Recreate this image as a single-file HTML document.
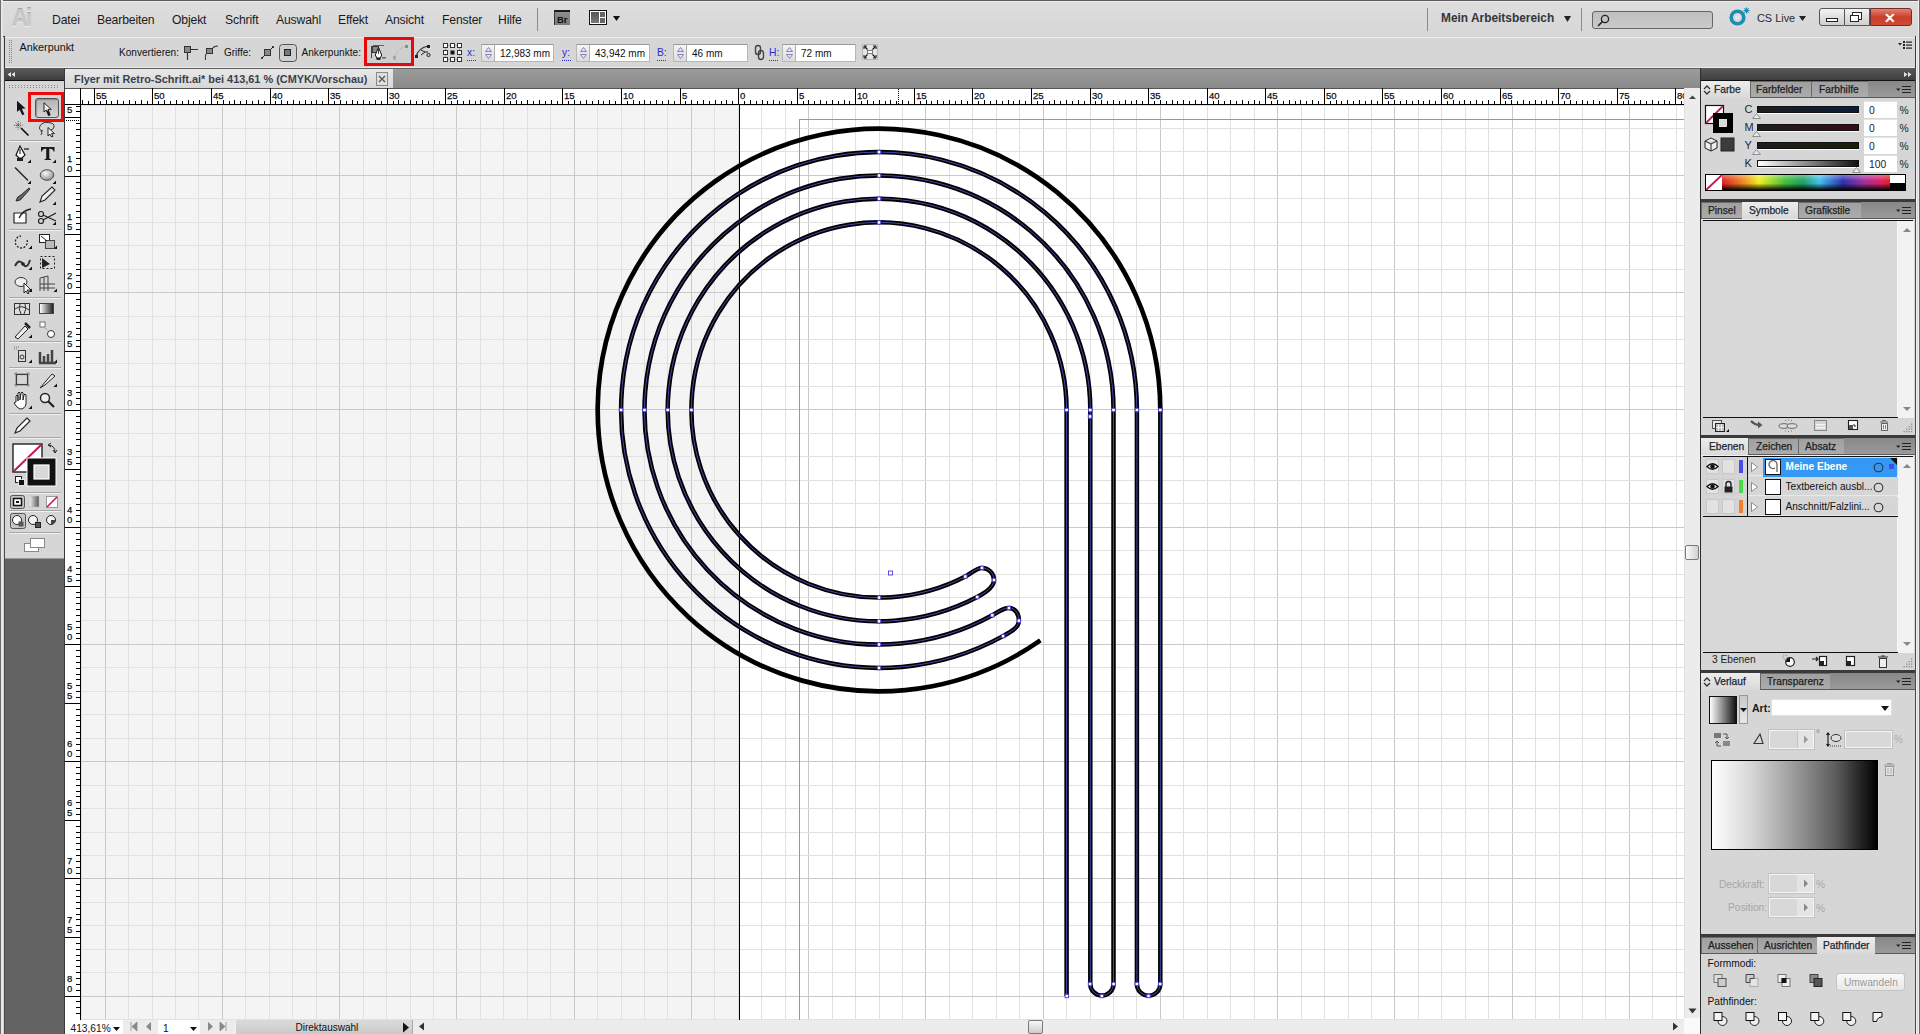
<!DOCTYPE html><html><head><meta charset="utf-8"><style>html,body{margin:0;padding:0;width:1920px;height:1034px;overflow:hidden;background:#d5d5d5;font-family:"Liberation Sans",sans-serif;}*{box-sizing:border-box;}</style></head><body><div style="position:absolute;left:0px;top:0px;width:1920px;height:1034px;background:#d5d5d5"></div><div style="position:absolute;left:0px;top:0px;width:1920px;height:36px;background:linear-gradient(#dedede,#d6d6d6)"></div><div style="position:absolute;left:0px;top:0px;width:1920px;height:1px;background:#5a5a5a"></div><div style="position:absolute;left:0px;top:1px;width:1920px;height:1px;background:#eeeeee"></div><div style="position:absolute;left:0px;top:36px;width:1920px;height:1px;background:#454545"></div><div style="position:absolute;left:11.5px;top:5.68px;font-size:24px;line-height:24px;color:#c8c8c8;font-weight:bold;white-space:nowrap;letter-spacing:-2.2px;transform:scaleX(0.92);transform-origin:left;text-shadow:0 1.2px 0 #ececec,0 -0.8px 0 #a4a4a4">Ai</div><div style="position:absolute;left:52px;top:13.97px;font-size:12.2px;line-height:12.2px;color:#1a1a1a;font-weight:normal;white-space:nowrap;letter-spacing:-0.15px">Datei</div><div style="position:absolute;left:97px;top:13.97px;font-size:12.2px;line-height:12.2px;color:#1a1a1a;font-weight:normal;white-space:nowrap;letter-spacing:-0.15px">Bearbeiten</div><div style="position:absolute;left:172px;top:13.97px;font-size:12.2px;line-height:12.2px;color:#1a1a1a;font-weight:normal;white-space:nowrap;letter-spacing:-0.15px">Objekt</div><div style="position:absolute;left:225px;top:13.97px;font-size:12.2px;line-height:12.2px;color:#1a1a1a;font-weight:normal;white-space:nowrap;letter-spacing:-0.15px">Schrift</div><div style="position:absolute;left:276px;top:13.97px;font-size:12.2px;line-height:12.2px;color:#1a1a1a;font-weight:normal;white-space:nowrap;letter-spacing:-0.15px">Auswahl</div><div style="position:absolute;left:338px;top:13.97px;font-size:12.2px;line-height:12.2px;color:#1a1a1a;font-weight:normal;white-space:nowrap;letter-spacing:-0.15px">Effekt</div><div style="position:absolute;left:385px;top:13.97px;font-size:12.2px;line-height:12.2px;color:#1a1a1a;font-weight:normal;white-space:nowrap;letter-spacing:-0.15px">Ansicht</div><div style="position:absolute;left:442px;top:13.97px;font-size:12.2px;line-height:12.2px;color:#1a1a1a;font-weight:normal;white-space:nowrap;letter-spacing:-0.15px">Fenster</div><div style="position:absolute;left:498px;top:13.97px;font-size:12.2px;line-height:12.2px;color:#1a1a1a;font-weight:normal;white-space:nowrap;letter-spacing:-0.15px">Hilfe</div><div style="position:absolute;left:537px;top:8px;width:1px;height:23px;background:#8a8a8a"></div><div style="position:absolute;left:554px;top:10px;width:16px;height:15px;background:linear-gradient(#8c8c8c,#7a7a7a);border-top:2px solid #1a1a1a;border-left:1px solid #333"></div><div style="position:absolute;left:557px;top:14.76px;font-size:9.5px;line-height:9.5px;color:#111;font-weight:bold;white-space:nowrap;">Br</div><div style="position:absolute;left:589px;top:10px;width:18px;height:15px;border:1.5px solid #111;background:#fff"></div><div style="position:absolute;left:591px;top:12px;width:8px;height:11px;background:linear-gradient(#555,#777)"></div><div style="position:absolute;left:600px;top:12px;width:5px;height:5px;background:#666"></div><div style="position:absolute;left:600px;top:18px;width:5px;height:5px;background:#666"></div><svg style="position:absolute;left:613px;top:16px;" width="7" height="5" viewBox="613 16 7 5"><path d="M613,16 L620,16 L616.5,21 Z" fill="#111"/></svg><div style="position:absolute;left:1427px;top:8px;width:1px;height:23px;background:#8a8a8a"></div><div style="position:absolute;left:1441px;top:13.43px;font-size:11.9px;line-height:11.9px;color:#33363c;font-weight:bold;white-space:nowrap;">Mein Arbeitsbereich</div><svg style="position:absolute;left:1564px;top:16px;" width="7" height="6" viewBox="1564 16 7 6"><path d="M1564,16 L1571,16 L1567.5,22 Z" fill="#222"/></svg><div style="position:absolute;left:1581px;top:8px;width:1px;height:23px;background:#8a8a8a"></div><div style="position:absolute;left:1592px;top:11px;width:121px;height:18px;background:linear-gradient(#c0c0c0,#cacaca);border:1px solid #666;border-radius:3px"></div><svg style="position:absolute;left:1596px;top:13px;" width="14" height="14" viewBox="1596 13 14 14"><circle cx="1605" cy="19" r="3.6" fill="none" stroke="#222" stroke-width="1.3"/><path d="M1602.5,21.5 L1598,26" stroke="#222" stroke-width="1.6"/></svg><svg style="position:absolute;left:1726px;top:6px;" width="24" height="22" viewBox="1726 6 24 22"><circle cx="1737.5" cy="17.5" r="6.3" fill="none" stroke="#1f8db2" stroke-width="3.6"/><circle cx="1737.5" cy="17.5" r="2.2" fill="#d8e8ee"/><path d="M1746.5,7.5 V13.5 M1743.5,10.5 H1749.5 M1744.4,8.4 L1748.6,12.6 M1748.6,8.4 L1744.4,12.6" stroke="#1f8db2" stroke-width="1.1"/></svg><div style="position:absolute;left:1757px;top:13.07px;font-size:10.9px;line-height:10.9px;color:#2a2a2a;font-weight:normal;white-space:nowrap;">CS Live</div><svg style="position:absolute;left:1799px;top:16px;" width="7" height="5" viewBox="1799 16 7 5"><path d="M1799,16 L1806,16 L1802.5,21 Z" fill="#222"/></svg><div style="position:absolute;left:1819px;top:8px;width:26px;height:18px;background:linear-gradient(#f2f2f2,#cfcfcf);border:1px solid #555;border-radius:3px 0 0 3px"></div><div style="position:absolute;left:1826px;top:18px;width:12px;height:4px;background:#fff;border:1px solid #222"></div><div style="position:absolute;left:1845px;top:8px;width:25px;height:18px;background:linear-gradient(#f2f2f2,#cfcfcf);border:1px solid #555;border-left:none"></div><div style="position:absolute;left:1852px;top:12px;width:10px;height:8px;border:1.5px solid #222;background:#fff"></div><div style="position:absolute;left:1850px;top:15px;width:9px;height:7px;border:1.5px solid #222;background:#fff"></div><div style="position:absolute;left:1870px;top:8px;width:42px;height:18px;background:linear-gradient(#e88070,#c8402c 50%,#d04a30);border:1px solid #6a3030;border-radius:0 3px 3px 0"></div><div style="position:absolute;left:1884px;top:11.15px;font-size:14px;line-height:14px;color:#fff;font-weight:bold;white-space:nowrap;">✕</div><div style="position:absolute;left:0px;top:0px;width:1px;height:1034px;background:#6e6e6e"></div><div style="position:absolute;left:1px;top:0px;width:2px;height:1034px;background:#e6e6e6"></div><div style="position:absolute;left:1916px;top:36px;width:1px;height:998px;background:#f0f0f0"></div><div style="position:absolute;left:1917px;top:36px;width:1px;height:998px;background:#dadada"></div><div style="position:absolute;left:1918px;top:0px;width:1px;height:1034px;background:#f0f0f0"></div><div style="position:absolute;left:1919px;top:0px;width:1px;height:1034px;background:#6a6a6a"></div><div style="position:absolute;left:4px;top:36px;width:1912px;height:32px;background:#d6d6d6"></div><div style="position:absolute;left:4px;top:36px;width:1px;height:32px;background:#3a3a3a"></div><div style="position:absolute;left:5px;top:37px;width:1911px;height:1px;background:#ececec"></div><div style="position:absolute;left:1915px;top:36px;width:1px;height:32px;background:#3a3a3a"></div><div style="position:absolute;left:5px;top:67px;width:1910px;height:1px;background:#ececec"></div><div style="position:absolute;left:9px;top:40px;width:1px;height:1px;background:#888"></div><div style="position:absolute;left:11px;top:40px;width:1px;height:1px;background:#888"></div><div style="position:absolute;left:9px;top:42px;width:1px;height:1px;background:#888"></div><div style="position:absolute;left:11px;top:42px;width:1px;height:1px;background:#888"></div><div style="position:absolute;left:9px;top:44px;width:1px;height:1px;background:#888"></div><div style="position:absolute;left:11px;top:44px;width:1px;height:1px;background:#888"></div><div style="position:absolute;left:9px;top:46px;width:1px;height:1px;background:#888"></div><div style="position:absolute;left:11px;top:46px;width:1px;height:1px;background:#888"></div><div style="position:absolute;left:9px;top:48px;width:1px;height:1px;background:#888"></div><div style="position:absolute;left:11px;top:48px;width:1px;height:1px;background:#888"></div><div style="position:absolute;left:9px;top:50px;width:1px;height:1px;background:#888"></div><div style="position:absolute;left:11px;top:50px;width:1px;height:1px;background:#888"></div><div style="position:absolute;left:9px;top:52px;width:1px;height:1px;background:#888"></div><div style="position:absolute;left:11px;top:52px;width:1px;height:1px;background:#888"></div><div style="position:absolute;left:9px;top:54px;width:1px;height:1px;background:#888"></div><div style="position:absolute;left:11px;top:54px;width:1px;height:1px;background:#888"></div><div style="position:absolute;left:9px;top:56px;width:1px;height:1px;background:#888"></div><div style="position:absolute;left:11px;top:56px;width:1px;height:1px;background:#888"></div><div style="position:absolute;left:9px;top:58px;width:1px;height:1px;background:#888"></div><div style="position:absolute;left:11px;top:58px;width:1px;height:1px;background:#888"></div><div style="position:absolute;left:9px;top:60px;width:1px;height:1px;background:#888"></div><div style="position:absolute;left:11px;top:60px;width:1px;height:1px;background:#888"></div><div style="position:absolute;left:9px;top:62px;width:1px;height:1px;background:#888"></div><div style="position:absolute;left:11px;top:62px;width:1px;height:1px;background:#888"></div><div style="position:absolute;left:19.5px;top:41.66px;font-size:10.8px;line-height:10.8px;color:#111;font-weight:normal;white-space:nowrap;">Ankerpunkt</div><div style="position:absolute;left:119px;top:48.25px;font-size:10.1px;line-height:10.1px;color:#111;font-weight:normal;white-space:nowrap;">Konvertieren:</div><svg style="position:absolute;left:183px;top:44px;" width="37" height="18" viewBox="183 44 37 18"><rect x="184.5" y="46.5" width="6" height="6" fill="#888" stroke="#333" stroke-width="1"/><path d="M191,49.5 H198 M187.5,53 V60" stroke="#333" stroke-width="1.2"/><rect x="206.5" y="48.5" width="6" height="5" fill="#888" stroke="#333" stroke-width="1"/><path d="M213,48 Q214,46 218,46 M206,54 Q205,56 205.5,60" stroke="#333" stroke-width="1.1" fill="none"/></svg><div style="position:absolute;left:224px;top:48.33px;font-size:10.0px;line-height:10.0px;color:#111;font-weight:normal;white-space:nowrap;">Griffe:</div><svg style="position:absolute;left:260px;top:43px;" width="38" height="20" viewBox="260 43 38 20"><rect x="264.5" y="49.5" width="6" height="6" fill="#888" stroke="#333" stroke-width="1"/><path d="M262,58 L264.5,55.5 M270.5,49.5 L273,47" stroke="#222" stroke-width="1"/><circle cx="262" cy="58" r="1" fill="#111"/><circle cx="273" cy="47" r="1" fill="#111"/><rect x="279.5" y="44.5" width="17" height="17" rx="3" fill="#cfcfcf" stroke="#555" stroke-width="1"/><rect x="284.5" y="49.5" width="6" height="6" fill="#777" stroke="#222" stroke-width="1"/></svg><div style="position:absolute;left:301.5px;top:48.25px;font-size:10.1px;line-height:10.1px;color:#111;font-weight:normal;white-space:nowrap;">Ankerpunkte:</div><div style="position:absolute;left:364px;top:37px;width:50px;height:29px;border:3.4px solid #e8080a;background:#cfcfcf"></div><svg style="position:absolute;left:368px;top:41px;" width="42" height="21" viewBox="368 41 42 21"><path d="M373,45.5 H384" stroke="#555" stroke-width="0.9" fill="none"/><path d="M371.5,46 V58" stroke="#333" stroke-width="0.9" fill="none"/><rect x="372.5" y="46.5" width="6" height="6" fill="#8a8a8a" stroke="#333"/><path d="M378.5,47.5 L375.3,55 L376.8,58 L380.2,58 L381.7,55 Z" fill="#fff" stroke="#111" stroke-width="1"/><path d="M378.5,49 V54" stroke="#111" stroke-width="0.8"/><rect x="376.5" y="58" width="4" height="1.8" fill="#111"/><path d="M382,57.8 H386" stroke="#555" stroke-width="1.3"/><path d="M394.5,57 Q397,49 405,46.5" stroke="#aaa" stroke-width="1" fill="none" stroke-dasharray="1.5,1"/><rect x="393" y="56" width="3" height="3.5" fill="#a4a4a4"/><rect x="405" y="45" width="3" height="3" fill="#8a8a8a"/></svg><svg style="position:absolute;left:414px;top:43px;" width="18" height="18" viewBox="414 43 18 18"><path d="M416,57 Q418,48 428,46" stroke="#333" stroke-width="1.2" fill="none"/><rect x="415" y="55" width="3" height="3" fill="#222"/><rect x="427" y="45" width="3" height="3" fill="#222"/><path d="M421,55 L425,52 L421,50 M425,52 H428" stroke="#222" stroke-width="1" fill="none"/><circle cx="428.5" cy="55" r="1.6" fill="none" stroke="#222"/></svg><svg style="position:absolute;left:442px;top:42px;" width="22" height="22" viewBox="442 42 22 22"><rect x="445.5" y="45.5" width="14" height="14" fill="none" stroke="#777" stroke-width="1" stroke-dasharray="1,1"/><rect x="443.5" y="43.5" width="4" height="4" fill="#fff" stroke="#333" stroke-width="1"/><rect x="443.5" y="50.5" width="4" height="4" fill="#fff" stroke="#333" stroke-width="1"/><rect x="443.5" y="57.5" width="4" height="4" fill="#fff" stroke="#333" stroke-width="1"/><rect x="450.5" y="43.5" width="4" height="4" fill="#fff" stroke="#333" stroke-width="1"/><rect x="450.5" y="50.5" width="4" height="4" fill="#111"/><rect x="450.5" y="57.5" width="4" height="4" fill="#fff" stroke="#333" stroke-width="1"/><rect x="457.5" y="43.5" width="4" height="4" fill="#fff" stroke="#333" stroke-width="1"/><rect x="457.5" y="50.5" width="4" height="4" fill="#fff" stroke="#333" stroke-width="1"/><rect x="457.5" y="57.5" width="4" height="4" fill="#fff" stroke="#333" stroke-width="1"/></svg><div style="position:absolute;left:467px;top:48.08px;font-size:10.3px;line-height:10.3px;color:#2a2ad0;font-weight:normal;white-space:nowrap;">x:</div><div style="position:absolute;left:467px;top:60px;width:1px;height:1px;background:#2a2ad0"></div><div style="position:absolute;left:469px;top:60px;width:1px;height:1px;background:#2a2ad0"></div><div style="position:absolute;left:471px;top:60px;width:1px;height:1px;background:#2a2ad0"></div><div style="position:absolute;left:473px;top:60px;width:1px;height:1px;background:#2a2ad0"></div><div style="position:absolute;left:475px;top:60px;width:1px;height:1px;background:#2a2ad0"></div><div style="position:absolute;left:481px;top:44px;width:73px;height:18px;background:#fff;border:1px solid #b8b8b8;border-top-color:#9a9a9a"></div><div style="position:absolute;left:482px;top:45px;width:13px;height:16px;background:linear-gradient(#f4f4f4,#dcdcdc);border-right:1px solid #b0b0b0"></div><svg style="position:absolute;left:484px;top:46px;" width="9" height="13" viewBox="484 46 9 13"><path d="M485.5,51.5 L488.5,47.5 L491.5,51.5 Z M485.5,54.5 L488.5,58.5 L491.5,54.5 Z" fill="#e4e4f4" stroke="#7878b8" stroke-width="0.9"/></svg><div style="position:absolute;left:500px;top:48.83px;font-size:10.0px;line-height:10.0px;color:#111;font-weight:normal;white-space:nowrap;">12,983 mm</div><div style="position:absolute;left:562px;top:48.08px;font-size:10.3px;line-height:10.3px;color:#2a2ad0;font-weight:normal;white-space:nowrap;">y:</div><div style="position:absolute;left:562px;top:60px;width:1px;height:1px;background:#2a2ad0"></div><div style="position:absolute;left:564px;top:60px;width:1px;height:1px;background:#2a2ad0"></div><div style="position:absolute;left:566px;top:60px;width:1px;height:1px;background:#2a2ad0"></div><div style="position:absolute;left:568px;top:60px;width:1px;height:1px;background:#2a2ad0"></div><div style="position:absolute;left:570px;top:60px;width:1px;height:1px;background:#2a2ad0"></div><div style="position:absolute;left:576px;top:44px;width:74px;height:18px;background:#fff;border:1px solid #b8b8b8;border-top-color:#9a9a9a"></div><div style="position:absolute;left:577px;top:45px;width:13px;height:16px;background:linear-gradient(#f4f4f4,#dcdcdc);border-right:1px solid #b0b0b0"></div><svg style="position:absolute;left:579px;top:46px;" width="9" height="13" viewBox="579 46 9 13"><path d="M580.5,51.5 L583.5,47.5 L586.5,51.5 Z M580.5,54.5 L583.5,58.5 L586.5,54.5 Z" fill="#e4e4f4" stroke="#7878b8" stroke-width="0.9"/></svg><div style="position:absolute;left:595px;top:48.83px;font-size:10.0px;line-height:10.0px;color:#111;font-weight:normal;white-space:nowrap;">43,942 mm</div><div style="position:absolute;left:657px;top:48.08px;font-size:10.3px;line-height:10.3px;color:#2a2ad0;font-weight:normal;white-space:nowrap;">B:</div><div style="position:absolute;left:657px;top:60px;width:1px;height:1px;background:#2a2ad0"></div><div style="position:absolute;left:659px;top:60px;width:1px;height:1px;background:#2a2ad0"></div><div style="position:absolute;left:661px;top:60px;width:1px;height:1px;background:#2a2ad0"></div><div style="position:absolute;left:663px;top:60px;width:1px;height:1px;background:#2a2ad0"></div><div style="position:absolute;left:665px;top:60px;width:1px;height:1px;background:#2a2ad0"></div><div style="position:absolute;left:673px;top:44px;width:75px;height:18px;background:#fff;border:1px solid #b8b8b8;border-top-color:#9a9a9a"></div><div style="position:absolute;left:674px;top:45px;width:13px;height:16px;background:linear-gradient(#f4f4f4,#dcdcdc);border-right:1px solid #b0b0b0"></div><svg style="position:absolute;left:676px;top:46px;" width="9" height="13" viewBox="676 46 9 13"><path d="M677.5,51.5 L680.5,47.5 L683.5,51.5 Z M677.5,54.5 L680.5,58.5 L683.5,54.5 Z" fill="#e4e4f4" stroke="#7878b8" stroke-width="0.9"/></svg><div style="position:absolute;left:692px;top:48.83px;font-size:10.0px;line-height:10.0px;color:#111;font-weight:normal;white-space:nowrap;">46 mm</div><div style="position:absolute;left:769px;top:48.08px;font-size:10.3px;line-height:10.3px;color:#2a2ad0;font-weight:normal;white-space:nowrap;">H:</div><div style="position:absolute;left:769px;top:60px;width:1px;height:1px;background:#2a2ad0"></div><div style="position:absolute;left:771px;top:60px;width:1px;height:1px;background:#2a2ad0"></div><div style="position:absolute;left:773px;top:60px;width:1px;height:1px;background:#2a2ad0"></div><div style="position:absolute;left:775px;top:60px;width:1px;height:1px;background:#2a2ad0"></div><div style="position:absolute;left:777px;top:60px;width:1px;height:1px;background:#2a2ad0"></div><div style="position:absolute;left:782px;top:44px;width:74px;height:18px;background:#fff;border:1px solid #b8b8b8;border-top-color:#9a9a9a"></div><div style="position:absolute;left:783px;top:45px;width:13px;height:16px;background:linear-gradient(#f4f4f4,#dcdcdc);border-right:1px solid #b0b0b0"></div><svg style="position:absolute;left:785px;top:46px;" width="9" height="13" viewBox="785 46 9 13"><path d="M786.5,51.5 L789.5,47.5 L792.5,51.5 Z M786.5,54.5 L789.5,58.5 L792.5,54.5 Z" fill="#e4e4f4" stroke="#7878b8" stroke-width="0.9"/></svg><div style="position:absolute;left:801px;top:48.83px;font-size:10.0px;line-height:10.0px;color:#111;font-weight:normal;white-space:nowrap;">72 mm</div><svg style="position:absolute;left:754px;top:44px;" width="12" height="18" viewBox="754 44 12 18"><rect x="755.5" y="45.5" width="5" height="9" rx="2.5" fill="none" stroke="#444" stroke-width="1.4"/><rect x="758.5" y="50.5" width="5" height="9" rx="2.5" fill="none" stroke="#444" stroke-width="1.4"/></svg><svg style="position:absolute;left:862px;top:44px;" width="17" height="17" viewBox="862 44 17 17"><rect x="862.5" y="44.5" width="15" height="15" fill="#e6e6e6" stroke="#b4b4b4"/><path d="M864.5,46.5 L867.5,49.5 M875.5,46.5 L872.5,49.5 M864.5,57.5 L867.5,54.5 M875.5,57.5 L872.5,54.5" stroke="#111" stroke-width="1.1"/><path d="M864,46 h3 M864,46 v3 M876,46 h-3 M876,46 v3 M864,58 h3 M864,58 v-3 M876,58 h-3 M876,58 v-3" stroke="#111" stroke-width="1"/><rect x="867.5" y="50.5" width="5" height="3" fill="#fff" stroke="#777"/></svg><svg style="position:absolute;left:1898px;top:40px;" width="15" height="11" viewBox="1898 40 15 11"><path d="M1898,43 L1902,43 L1900,45.5 Z" fill="#222"/><rect x="1903" y="41" width="2" height="2" fill="#222"/><rect x="1906" y="41.5" width="6" height="1.2" fill="#222"/><rect x="1903" y="44" width="2" height="2" fill="#222"/><rect x="1906" y="44.5" width="6" height="1.2" fill="#222"/><rect x="1903" y="47" width="2" height="2" fill="#222"/><rect x="1906" y="47.5" width="6" height="1.2" fill="#222"/></svg><div style="position:absolute;left:4px;top:68px;width:1696px;height:20px;background:linear-gradient(#9c9c9c,#8a8a8a)"></div><div style="position:absolute;left:4px;top:68px;width:1912px;height:1px;background:#5e5e5e"></div><div style="position:absolute;left:65px;top:69px;width:328px;height:19px;background:linear-gradient(#e8e8e8,#d8d8d8)"></div><div style="position:absolute;left:74px;top:74.07px;font-size:10.9px;line-height:10.9px;color:#3a404c;font-weight:bold;white-space:nowrap;">Flyer mit Retro-Schrift.ai* bei 413,61 % (CMYK/Vorschau)</div><div style="position:absolute;left:376px;top:72px;width:12px;height:14px;border:1px solid #8a8a8a;background:#dedede"></div><svg style="position:absolute;left:377px;top:73px;" width="10" height="12" viewBox="377 73 10 12"><path d="M379,76 L385,82 M385,76 L379,82" stroke="#555" stroke-width="1.2"/></svg><div style="position:absolute;left:4px;top:68px;width:61px;height:966px;background:#636363"></div><div style="position:absolute;left:4px;top:68px;width:1px;height:966px;background:#4a4a4a"></div><div style="position:absolute;left:5px;top:68px;width:60px;height:12px;background:linear-gradient(#5c5c5c,#3e3e3e)"></div><div style="position:absolute;left:5px;top:80px;width:60px;height:1px;background:#111"></div><svg style="position:absolute;left:7px;top:71px;" width="10" height="7" viewBox="7 71 10 7"><path d="M7.5,74.5 L11,72 L11,77 Z M11.5,74.5 L15,72 L15,77 Z" fill="#e4e4e4"/></svg><div style="position:absolute;left:5px;top:81px;width:60px;height:478px;background:#d6d6d6;border-bottom:1px solid #9a9a9a"></div><div style="position:absolute;left:64px;top:68px;width:1px;height:966px;background:#3a3a3a"></div><div style="position:absolute;left:9px;top:85px;width:1px;height:1px;background:#8a8a8a"></div><div style="position:absolute;left:9px;top:87px;width:1px;height:1px;background:#8a8a8a"></div><div style="position:absolute;left:12px;top:85px;width:1px;height:1px;background:#8a8a8a"></div><div style="position:absolute;left:12px;top:87px;width:1px;height:1px;background:#8a8a8a"></div><div style="position:absolute;left:15px;top:85px;width:1px;height:1px;background:#8a8a8a"></div><div style="position:absolute;left:15px;top:87px;width:1px;height:1px;background:#8a8a8a"></div><div style="position:absolute;left:18px;top:85px;width:1px;height:1px;background:#8a8a8a"></div><div style="position:absolute;left:18px;top:87px;width:1px;height:1px;background:#8a8a8a"></div><div style="position:absolute;left:21px;top:85px;width:1px;height:1px;background:#8a8a8a"></div><div style="position:absolute;left:21px;top:87px;width:1px;height:1px;background:#8a8a8a"></div><div style="position:absolute;left:24px;top:85px;width:1px;height:1px;background:#8a8a8a"></div><div style="position:absolute;left:24px;top:87px;width:1px;height:1px;background:#8a8a8a"></div><div style="position:absolute;left:27px;top:85px;width:1px;height:1px;background:#8a8a8a"></div><div style="position:absolute;left:27px;top:87px;width:1px;height:1px;background:#8a8a8a"></div><div style="position:absolute;left:30px;top:85px;width:1px;height:1px;background:#8a8a8a"></div><div style="position:absolute;left:30px;top:87px;width:1px;height:1px;background:#8a8a8a"></div><div style="position:absolute;left:33px;top:85px;width:1px;height:1px;background:#8a8a8a"></div><div style="position:absolute;left:33px;top:87px;width:1px;height:1px;background:#8a8a8a"></div><div style="position:absolute;left:36px;top:85px;width:1px;height:1px;background:#8a8a8a"></div><div style="position:absolute;left:36px;top:87px;width:1px;height:1px;background:#8a8a8a"></div><div style="position:absolute;left:39px;top:85px;width:1px;height:1px;background:#8a8a8a"></div><div style="position:absolute;left:39px;top:87px;width:1px;height:1px;background:#8a8a8a"></div><div style="position:absolute;left:42px;top:85px;width:1px;height:1px;background:#8a8a8a"></div><div style="position:absolute;left:42px;top:87px;width:1px;height:1px;background:#8a8a8a"></div><div style="position:absolute;left:45px;top:85px;width:1px;height:1px;background:#8a8a8a"></div><div style="position:absolute;left:45px;top:87px;width:1px;height:1px;background:#8a8a8a"></div><div style="position:absolute;left:48px;top:85px;width:1px;height:1px;background:#8a8a8a"></div><div style="position:absolute;left:48px;top:87px;width:1px;height:1px;background:#8a8a8a"></div><div style="position:absolute;left:51px;top:85px;width:1px;height:1px;background:#8a8a8a"></div><div style="position:absolute;left:51px;top:87px;width:1px;height:1px;background:#8a8a8a"></div><div style="position:absolute;left:54px;top:85px;width:1px;height:1px;background:#8a8a8a"></div><div style="position:absolute;left:54px;top:87px;width:1px;height:1px;background:#8a8a8a"></div><div style="position:absolute;left:57px;top:85px;width:1px;height:1px;background:#8a8a8a"></div><div style="position:absolute;left:57px;top:87px;width:1px;height:1px;background:#8a8a8a"></div><svg style="position:absolute;left:27px;top:159px;" width="5" height="5" viewBox="27 159 5 5"><path d="M31,159.5 L31,163 L27.5,163 Z" fill="#111"/></svg><svg style="position:absolute;left:52px;top:159px;" width="5" height="5" viewBox="52 159 5 5"><path d="M56,159.5 L56,163 L52.5,163 Z" fill="#111"/></svg><svg style="position:absolute;left:27px;top:180px;" width="5" height="5" viewBox="27 180 5 5"><path d="M31,180.5 L31,184 L27.5,184 Z" fill="#111"/></svg><svg style="position:absolute;left:52px;top:180px;" width="5" height="5" viewBox="52 180 5 5"><path d="M56,180.5 L56,184 L52.5,184 Z" fill="#111"/></svg><svg style="position:absolute;left:52px;top:201px;" width="5" height="5" viewBox="52 201 5 5"><path d="M56,201.5 L56,205 L52.5,205 Z" fill="#111"/></svg><svg style="position:absolute;left:52px;top:221px;" width="5" height="5" viewBox="52 221 5 5"><path d="M56,221.5 L56,225 L52.5,225 Z" fill="#111"/></svg><svg style="position:absolute;left:28px;top:245px;" width="5" height="5" viewBox="28 245 5 5"><path d="M32,245.5 L32,249 L28.5,249 Z" fill="#111"/></svg><svg style="position:absolute;left:53px;top:245px;" width="5" height="5" viewBox="53 245 5 5"><path d="M57,245.5 L57,249 L53.5,249 Z" fill="#111"/></svg><svg style="position:absolute;left:28px;top:266px;" width="5" height="5" viewBox="28 266 5 5"><path d="M32,266.5 L32,270 L28.5,270 Z" fill="#111"/></svg><svg style="position:absolute;left:28px;top:288px;" width="5" height="5" viewBox="28 288 5 5"><path d="M32,288.5 L32,292 L28.5,292 Z" fill="#111"/></svg><svg style="position:absolute;left:53px;top:288px;" width="5" height="5" viewBox="53 288 5 5"><path d="M57,288.5 L57,292 L53.5,292 Z" fill="#111"/></svg><svg style="position:absolute;left:28px;top:334px;" width="5" height="5" viewBox="28 334 5 5"><path d="M32,334.5 L32,338 L28.5,338 Z" fill="#111"/></svg><svg style="position:absolute;left:28px;top:359px;" width="5" height="5" viewBox="28 359 5 5"><path d="M32,359.5 L32,363 L28.5,363 Z" fill="#111"/></svg><svg style="position:absolute;left:53px;top:359px;" width="5" height="5" viewBox="53 359 5 5"><path d="M57,359.5 L57,363 L53.5,363 Z" fill="#111"/></svg><svg style="position:absolute;left:53px;top:383px;" width="5" height="5" viewBox="53 383 5 5"><path d="M57,383.5 L57,387 L53.5,387 Z" fill="#111"/></svg><svg style="position:absolute;left:28px;top:405px;" width="5" height="5" viewBox="28 405 5 5"><path d="M32,405.5 L32,409 L28.5,409 Z" fill="#111"/></svg><div style="position:absolute;left:28px;top:92px;width:36px;height:30px;border:3.6px solid #ee0a0a"></div><div style="position:absolute;left:35px;top:98px;width:24px;height:20px;background:linear-gradient(#b4b4b4,#d4d4d4);border:1px solid #555;border-radius:3px;box-shadow:inset 1px 1px 1px rgba(0,0,0,0.25)"></div><svg style="position:absolute;left:14px;top:98px;" width="16" height="20" viewBox="14 98 16 20"><path d="M17,100.8 L17,112 L19.6,109.8 L22.3,115.2 L24.4,114.2 L21.8,108.8 L25.6,108.6 Z" fill="#151515"/></svg><svg style="position:absolute;left:40px;top:100px;" width="16" height="18" viewBox="40 100 16 18"><path d="M44,102.8 L44,112 L46.2,110 L48.5,115.6 L50.2,114.9 L48,109.4 L51.2,109.4 Z" fill="#f4f4f4" stroke="#111" stroke-width="0.9"/><path d="M46.6,111 L48.5,115.6 L50.2,114.9 L48.2,110.2 Z" fill="#111"/></svg><svg style="position:absolute;left:12px;top:119px;" width="20" height="19" viewBox="12 119 20 19"><path d="M21,128 L28.5,135.5" stroke="#111" stroke-width="1.7"/><path d="M15.5,122.5 L21,128 M21,122.5 L15.5,128 M18.2,121 V129.5 M14,125.3 H22.5" stroke="#444" stroke-width="0.9" stroke-dasharray="1.2,0.8"/></svg><svg style="position:absolute;left:36px;top:119px;" width="22" height="19" viewBox="36 119 22 19"><path d="M43,131 Q38,130 40,126 Q42,122 48,122.5 Q55,123 54,127 Q53.5,129.5 50,130.5" fill="none" stroke="#333" stroke-width="1"/><path d="M41,131 Q43,133 41,135" fill="none" stroke="#333" stroke-width="1"/><path d="M48,127.5 L48,136 L50,134.2 L51.6,137 L53,136.3 L51.5,133.6 L54.5,133.6 Z" fill="#f4f4f4" stroke="#111" stroke-width="0.9"/></svg><div style="position:absolute;left:9px;top:141px;width:52px;height:1px;background:#f0f0f0"></div><div style="position:absolute;left:9px;top:140px;width:52px;height:1px;background:#a8a8a8"></div><svg style="position:absolute;left:13px;top:144px;" width="20" height="20" viewBox="13 144 20 20"><path d="M20,146 L16,155 L19,158 L22,158 L25,155 Z" fill="#fff" stroke="#111" stroke-width="1.2"/><path d="M20,149 V154" stroke="#111"/><path d="M24,149 H29" stroke="#111" stroke-width="1.2"/><rect x="17" y="158" width="6" height="3" fill="#222"/></svg><svg style="position:absolute;left:40px;top:145px;" width="16" height="17" viewBox="40 145 16 17"><path d="M41,147 H54.5 V151.5 H53.5 Q53,148.8 50,148.8 H49.3 V158 Q49.3,159.2 51,159.3 V160 H44.5 V159.3 Q46.2,159.2 46.2,158 V148.8 H45.5 Q42.5,148.8 42,151.5 H41 Z" fill="#1a1a1a"/></svg><svg style="position:absolute;left:13px;top:166px;" width="20" height="18" viewBox="13 166 20 18"><path d="M15,167.5 L28,180.5" stroke="#222" stroke-width="1.4"/></svg><svg style="position:absolute;left:38px;top:166px;" width="20" height="18" viewBox="38 166 20 18"><defs><radialGradient id="eg" cx="0.4" cy="0.35" r="0.7"><stop offset="0" stop-color="#fafafa"/><stop offset="1" stop-color="#8a8a8a"/></radialGradient></defs><ellipse cx="47" cy="175" rx="6.8" ry="5.3" fill="url(#eg)" stroke="#444" stroke-width="0.9"/></svg><svg style="position:absolute;left:13px;top:186px;" width="20" height="18" viewBox="13 186 20 18"><path d="M16,201 Q17,196 21,195 L29,188 L30,189 L23,197 Q21,201 16,201 Z" fill="#666" stroke="#222" stroke-width="0.9"/></svg><svg style="position:absolute;left:38px;top:186px;" width="20" height="18" viewBox="38 186 20 18"><path d="M40,202 L42,196 L52,187 L55,190 L45,200 Z" fill="#eee" stroke="#222" stroke-width="1.1"/></svg><svg style="position:absolute;left:12px;top:207px;" width="22" height="18" viewBox="12 207 22 18"><path d="M14,213 H26 V223 H14 Z" fill="#fff" stroke="#222" stroke-width="1.2"/><path d="M19,218 Q23,210 31,209" stroke="#222" stroke-width="1.4" fill="none"/></svg><svg style="position:absolute;left:37px;top:207px;" width="22" height="18" viewBox="37 207 22 18"><circle cx="41" cy="214" r="2.5" fill="none" stroke="#222" stroke-width="1.2"/><circle cx="41" cy="221" r="2.5" fill="none" stroke="#222" stroke-width="1.2"/><path d="M43,215 L56,221 M43,220 L56,213" stroke="#222" stroke-width="1.3"/></svg><div style="position:absolute;left:9px;top:229px;width:52px;height:1px;background:#a8a8a8"></div><div style="position:absolute;left:9px;top:230px;width:52px;height:1px;background:#f0f0f0"></div><svg style="position:absolute;left:12px;top:232px;" width="22" height="20" viewBox="12 232 22 20"><path d="M27,240 A6,6 0 1 1 21,236" fill="none" stroke="#222" stroke-width="1.3" stroke-dasharray="2,1.5"/></svg><svg style="position:absolute;left:37px;top:233px;" width="22" height="18" viewBox="37 233 22 18"><rect x="39.5" y="234.5" width="10" height="8" fill="#fff" stroke="#222"/><rect x="45.5" y="240.5" width="9" height="8" fill="#bbb" stroke="#444"/><path d="M41,236 L47,241" stroke="#222"/></svg><svg style="position:absolute;left:12px;top:254px;" width="22" height="20" viewBox="12 254 22 20"><path d="M15,266 Q19,258 23,264 Q27,270 30,260" fill="none" stroke="#333" stroke-width="2"/><circle cx="23" cy="264" r="1.8" fill="#222"/></svg><svg style="position:absolute;left:37px;top:254px;" width="22" height="20" viewBox="37 254 22 20"><rect x="40.5" y="256.5" width="14" height="12" fill="none" stroke="#222" stroke-dasharray="2,2"/><path d="M42,258 L42,268 L50,264 Z" fill="#222"/></svg><svg style="position:absolute;left:12px;top:275px;" width="22" height="20" viewBox="12 275 22 20"><ellipse cx="21" cy="282" rx="6" ry="4.5" fill="#eee" stroke="#333"/><path d="M24,283 L24,293 L26,291 L28,294 L29,293 L27,290 L31,290 Z" fill="#fff" stroke="#111" stroke-width="0.9"/></svg><svg style="position:absolute;left:37px;top:275px;" width="22" height="20" viewBox="37 275 22 20"><path d="M40,291 L40,278 L48,276 L48,291 M44,277 V291 M40,284 H48 M48,284 H55 M40,288 H55" fill="none" stroke="#444" stroke-width="1"/></svg><div style="position:absolute;left:9px;top:297px;width:52px;height:1px;background:#a8a8a8"></div><div style="position:absolute;left:9px;top:298px;width:52px;height:1px;background:#f0f0f0"></div><svg style="position:absolute;left:12px;top:301px;" width="22" height="18" viewBox="12 301 22 18"><rect x="14.5" y="303.5" width="15" height="11" fill="#ddd" stroke="#333"/><path d="M15,309 Q22,304 29,310 M20,304 Q18,309 21,314 M25,304 Q27,309 24,314" fill="none" stroke="#333"/></svg><div style="position:absolute;left:39px;top:303px;width:15px;height:11px;background:linear-gradient(90deg,#fff,#222);border:1px solid #444"></div><svg style="position:absolute;left:12px;top:320px;" width="22" height="20" viewBox="12 320 22 20"><path d="M15,337 L25,326 L28,329 L18,339 Z" fill="#eee" stroke="#222"/><path d="M25,323 L30,328" stroke="#222" stroke-width="2.5"/></svg><svg style="position:absolute;left:37px;top:320px;" width="22" height="20" viewBox="37 320 22 20"><rect x="40" y="322" width="5" height="5" fill="#fff" stroke="#555" stroke-width="0.8"/><circle cx="51" cy="334" r="3.5" fill="#fff" stroke="#333"/><path d="M45,328 L48,331" stroke="#888" stroke-dasharray="1,1"/></svg><div style="position:absolute;left:9px;top:341px;width:52px;height:1px;background:#a8a8a8"></div><div style="position:absolute;left:9px;top:342px;width:52px;height:1px;background:#f0f0f0"></div><svg style="position:absolute;left:12px;top:345px;" width="22" height="20" viewBox="12 345 22 20"><rect x="18.5" y="350.5" width="7" height="11" fill="#ddd" stroke="#333"/><circle cx="22" cy="357" r="2" fill="none" stroke="#333"/><path d="M14,347 H19 M14,349 H18" stroke="#777" stroke-dasharray="1,1"/></svg><svg style="position:absolute;left:37px;top:345px;" width="22" height="20" viewBox="37 345 22 20"><path d="M39,363 H56 M40,363 V352 M44,363 V356 M48,363 V354 M52,363 V350" stroke="#444" stroke-width="2.5"/></svg><div style="position:absolute;left:9px;top:367px;width:52px;height:1px;background:#a8a8a8"></div><div style="position:absolute;left:9px;top:368px;width:52px;height:1px;background:#f0f0f0"></div><svg style="position:absolute;left:12px;top:370px;" width="22" height="20" viewBox="12 370 22 20"><rect x="16.5" y="374.5" width="11" height="10" fill="none" stroke="#333" stroke-width="1.1"/><path d="M14,374 H30 M14,385 H30 M16,372 V387 M28,372 V387" stroke="#555" stroke-width="0.6"/></svg><svg style="position:absolute;left:37px;top:370px;" width="22" height="20" viewBox="37 370 22 20"><path d="M40,388 L52,374 L55,376 L45,385 Z" fill="#eee" stroke="#222"/></svg><svg style="position:absolute;left:12px;top:391px;" width="22" height="20" viewBox="12 391 22 20"><path d="M16,402 L16,396 Q17,394 18,396 L18,401 L18,393 Q19,391 20,393 L20,400 L21,393 Q22,391 23,393 L23,400 L24,395 Q25,393 26,395 L26,404 Q25,409 20,409 Q17,408 14,403 Z" fill="#fff" stroke="#222" stroke-width="1"/></svg><svg style="position:absolute;left:37px;top:391px;" width="22" height="20" viewBox="37 391 22 20"><circle cx="45" cy="398" r="4.5" fill="#eee" stroke="#222" stroke-width="1.4"/><path d="M48,401 L54,407" stroke="#222" stroke-width="2.2"/></svg><div style="position:absolute;left:9px;top:413px;width:52px;height:1px;background:#a8a8a8"></div><div style="position:absolute;left:9px;top:414px;width:52px;height:1px;background:#f0f0f0"></div><svg style="position:absolute;left:12px;top:416px;" width="22" height="20" viewBox="12 416 22 20"><path d="M15,433 L17,428 L27,418 L30,421 L20,431 Z" fill="#fff" stroke="#222" stroke-width="1.2"/></svg><div style="position:absolute;left:9px;top:437px;width:52px;height:1px;background:#a8a8a8"></div><div style="position:absolute;left:9px;top:438px;width:52px;height:1px;background:#f0f0f0"></div><svg style="position:absolute;left:10px;top:440px;" width="48" height="50" viewBox="10 440 48 50"><rect x="13" y="444" width="29" height="28" fill="#fff" stroke="#111" stroke-width="1.3"/><path d="M14,471 L41,445" stroke="#c81848" stroke-width="2"/><rect x="27" y="458" width="29" height="28" fill="#111" stroke="#fff" stroke-width="1"/><rect x="34" y="465" width="15" height="14" fill="#d8d8d8" stroke="#fff" stroke-width="1.2"/><path d="M49,445 Q55,446 55,452 M53,450 L55,453 L57,450 M51,443 L48,445 L51,447" fill="none" stroke="#222" stroke-width="1"/><rect x="15.5" y="476.5" width="6" height="6" fill="#fff" stroke="#222"/><rect x="18.5" y="479.5" width="6" height="6" fill="#111" stroke="#fff" stroke-width="0.8"/></svg><div style="position:absolute;left:9px;top:492px;width:52px;height:1px;background:#a8a8a8"></div><div style="position:absolute;left:9px;top:493px;width:52px;height:1px;background:#f0f0f0"></div><svg style="position:absolute;left:9px;top:494px;" width="52" height="16" viewBox="9 494 52 16"><rect x="10.5" y="495.5" width="14" height="13" rx="2" fill="#c4c4c4" stroke="#555"/><rect x="13.5" y="498.5" width="8" height="7" fill="#fff" stroke="#111" stroke-width="1.5"/><rect x="16" y="501" width="3" height="2" fill="#111"/><defs><linearGradient id="tg" x1="0" x2="1"><stop offset="0" stop-color="#f4f4f4"/><stop offset="1" stop-color="#555"/></linearGradient></defs><rect x="29" y="496" width="10" height="11" fill="url(#tg)" stroke="#bbb" stroke-width="0.6"/><rect x="46.5" y="496.5" width="11" height="11" fill="#fff" stroke="#999"/><path d="M47,507 L57,497" stroke="#c81848" stroke-width="1.6"/></svg><div style="position:absolute;left:9px;top:510px;width:52px;height:1px;background:#a8a8a8"></div><div style="position:absolute;left:9px;top:511px;width:52px;height:1px;background:#f0f0f0"></div><svg style="position:absolute;left:9px;top:512px;" width="52" height="18" viewBox="9 512 52 18"><rect x="10.5" y="513.5" width="15" height="15" rx="2" fill="#c4c4c4" stroke="#555"/><circle cx="17" cy="520" r="4.5" fill="#fff" stroke="#222"/><rect x="18.5" y="521.5" width="5" height="5" fill="#555"/><circle cx="33" cy="520" r="4.5" fill="#f4f4f4" stroke="#222"/><rect x="35.5" y="522.5" width="5" height="5" fill="#555" stroke="#222"/><circle cx="51" cy="520" r="4.5" fill="#f4f4f4" stroke="#222"/><path d="M51,520 L55.5,520 A4.5,4.5 0 0 1 51,524.5 Z" fill="#444"/></svg><div style="position:absolute;left:9px;top:532px;width:52px;height:1px;background:#a8a8a8"></div><div style="position:absolute;left:9px;top:533px;width:52px;height:1px;background:#f0f0f0"></div><svg style="position:absolute;left:22px;top:537px;" width="26" height="16" viewBox="22 537 26 16"><rect x="24.5" y="543.5" width="14" height="8" fill="#fff" stroke="#888"/><rect x="30.5" y="538.5" width="14" height="9" fill="#fff" stroke="#888"/></svg><div style="position:absolute;left:1700px;top:68px;width:216px;height:966px;background:#d6d6d6"></div><div style="position:absolute;left:1700px;top:68px;width:1px;height:966px;background:#2e2e2e"></div><div style="position:absolute;left:1701px;top:68px;width:214px;height:12px;background:linear-gradient(#5a5a5a,#3e3e3e)"></div><div style="position:absolute;left:1701px;top:80px;width:214px;height:1px;background:#111"></div><svg style="position:absolute;left:1902px;top:71px;" width="10" height="7" viewBox="1902 71 10 7"><path d="M1911.5,74.5 L1908,72 L1908,77 Z M1907.5,74.5 L1904,72 L1904,77 Z" fill="#e4e4e4"/></svg><div style="position:absolute;left:1915px;top:68px;width:1px;height:966px;background:#484848"></div><div style="position:absolute;left:1701px;top:81px;width:214px;height:17px;background:linear-gradient(#888,#9a9a9a);border-bottom:1px solid #5a5a5a"></div><div style="position:absolute;left:1701px;top:81px;width:49px;height:18px;background:linear-gradient(#ececec,#d8d8d8)"></div><div style="position:absolute;left:1714px;top:84.97px;font-size:10.2px;line-height:10.2px;color:#1e2430;font-weight:normal;white-space:nowrap;-webkit-text-stroke:0.25px currentColor">Farbe</div><div style="position:absolute;left:1750px;top:81px;width:61px;height:17px;background:linear-gradient(#a0a0a0,#acacac);border-top:1px solid #6a6a6a;border-left:1px solid #6a6a6a;border-bottom:1px solid #5a5a5a"></div><div style="position:absolute;left:1756px;top:84.97px;font-size:10.2px;line-height:10.2px;color:#1e1e1e;font-weight:normal;white-space:nowrap;-webkit-text-stroke:0.25px currentColor">Farbfelder</div><div style="position:absolute;left:1811px;top:81px;width:57px;height:17px;background:linear-gradient(#a0a0a0,#acacac);border-top:1px solid #6a6a6a;border-left:1px solid #6a6a6a;border-bottom:1px solid #5a5a5a"></div><div style="position:absolute;left:1819px;top:84.97px;font-size:10.2px;line-height:10.2px;color:#1e1e1e;font-weight:normal;white-space:nowrap;-webkit-text-stroke:0.25px currentColor">Farbhilfe</div><svg style="position:absolute;left:1895px;top:84px;" width="18" height="11" viewBox="1895 84 18 11"><path d="M1896,88.5 L1900.5,88.5 L1898.25,91 Z" fill="#222"/><path d="M1902,86.5 H1911 M1902,89.5 H1911 M1902,92.5 H1911" stroke="#222" stroke-width="1.2"/></svg><svg style="position:absolute;left:1703px;top:84px;" width="8" height="11" viewBox="1703 84 8 11"><path d="M1704,89 L1707,86 L1710,89 M1704,91 L1707,94 L1710,91" fill="none" stroke="#333" stroke-width="1.3"/></svg><div style="position:absolute;left:1701px;top:98px;width:214px;height:101px;background:#d6d6d6"></div><svg style="position:absolute;left:1704px;top:104px;" width="32" height="30" viewBox="1704 104 32 30"><rect x="1705.5" y="105.5" width="18" height="18" fill="#fff" stroke="#111" stroke-width="1.2"/><path d="M1706,123 L1723,106" stroke="#c81848" stroke-width="1.8"/><rect x="1713.5" y="113.5" width="19" height="19" fill="#000" stroke="#000"/><rect x="1719.5" y="119.5" width="7" height="7" fill="#d8d8d8" stroke="#fff" stroke-width="0.8"/></svg><svg style="position:absolute;left:1704px;top:136px;" width="32" height="17" viewBox="1704 136 32 17"><path d="M1711,138 L1717,141 L1717,148 L1711,151 L1705,148 L1705,141 Z M1705,141 L1711,144 L1717,141 M1711,144 V151" fill="#eee" stroke="#222" stroke-width="1"/><rect x="1721" y="138" width="13" height="13" fill="#3c3c3c" stroke="#222"/></svg><div style="position:absolute;left:1744.5px;top:103.99px;font-size:11px;line-height:11px;color:#202838;font-weight:normal;white-space:nowrap;">C</div><div style="position:absolute;left:1757px;top:106px;width:102px;height:7px;background:linear-gradient(90deg,#1e1e1e,#0a1c3c);border:1px solid #111;box-shadow:0 1px 0 #fff"></div><svg style="position:absolute;left:1752px;top:113px;" width="9" height="6" viewBox="1752 113 9 6"><path d="M1752.5,118.5 L1756.5,113.5 L1760.5,118.5 Z" fill="#e8e8e8" stroke="#888" stroke-width="0.9"/></svg><div style="position:absolute;left:1864px;top:101px;width:33px;height:17px;background:#fff;border-top:1px solid #e4e4e4"></div><div style="position:absolute;left:1869px;top:105.58px;font-size:10.3px;line-height:10.3px;color:#1a2030;font-weight:normal;white-space:nowrap;">0</div><div style="position:absolute;left:1899.5px;top:105.58px;font-size:10.3px;line-height:10.3px;color:#222;font-weight:normal;white-space:nowrap;">%</div><div style="position:absolute;left:1744.5px;top:121.99px;font-size:11px;line-height:11px;color:#202838;font-weight:normal;white-space:nowrap;">M</div><div style="position:absolute;left:1757px;top:124px;width:102px;height:7px;background:linear-gradient(90deg,#1e1e1e,#3a0a18);border:1px solid #111;box-shadow:0 1px 0 #fff"></div><svg style="position:absolute;left:1752px;top:131px;" width="9" height="6" viewBox="1752 131 9 6"><path d="M1752.5,136.5 L1756.5,131.5 L1760.5,136.5 Z" fill="#e8e8e8" stroke="#888" stroke-width="0.9"/></svg><div style="position:absolute;left:1864px;top:119px;width:33px;height:17px;background:#fff;border-top:1px solid #e4e4e4"></div><div style="position:absolute;left:1869px;top:123.58px;font-size:10.3px;line-height:10.3px;color:#1a2030;font-weight:normal;white-space:nowrap;">0</div><div style="position:absolute;left:1899.5px;top:123.58px;font-size:10.3px;line-height:10.3px;color:#222;font-weight:normal;white-space:nowrap;">%</div><div style="position:absolute;left:1744.5px;top:139.99px;font-size:11px;line-height:11px;color:#202838;font-weight:normal;white-space:nowrap;">Y</div><div style="position:absolute;left:1757px;top:142px;width:102px;height:7px;background:linear-gradient(90deg,#1e1e1e,#1c1c08);border:1px solid #111;box-shadow:0 1px 0 #fff"></div><svg style="position:absolute;left:1752px;top:149px;" width="9" height="6" viewBox="1752 149 9 6"><path d="M1752.5,154.5 L1756.5,149.5 L1760.5,154.5 Z" fill="#e8e8e8" stroke="#888" stroke-width="0.9"/></svg><div style="position:absolute;left:1864px;top:137px;width:33px;height:17px;background:#fff;border-top:1px solid #e4e4e4"></div><div style="position:absolute;left:1869px;top:141.58px;font-size:10.3px;line-height:10.3px;color:#1a2030;font-weight:normal;white-space:nowrap;">0</div><div style="position:absolute;left:1899.5px;top:141.58px;font-size:10.3px;line-height:10.3px;color:#222;font-weight:normal;white-space:nowrap;">%</div><div style="position:absolute;left:1744.5px;top:157.99px;font-size:11px;line-height:11px;color:#202838;font-weight:normal;white-space:nowrap;">K</div><div style="position:absolute;left:1757px;top:160px;width:102px;height:7px;background:linear-gradient(90deg,#fff,#888 50%,#111);border:1px solid #111;box-shadow:0 1px 0 #fff"></div><svg style="position:absolute;left:1852px;top:167px;" width="9" height="6" viewBox="1852 167 9 6"><path d="M1852.5,172.5 L1856.5,167.5 L1860.5,172.5 Z" fill="#e8e8e8" stroke="#888" stroke-width="0.9"/></svg><div style="position:absolute;left:1864px;top:155px;width:33px;height:17px;background:#fff;border-top:1px solid #e4e4e4"></div><div style="position:absolute;left:1869px;top:159.58px;font-size:10.3px;line-height:10.3px;color:#1a2030;font-weight:normal;white-space:nowrap;">100</div><div style="position:absolute;left:1899.5px;top:159.58px;font-size:10.3px;line-height:10.3px;color:#222;font-weight:normal;white-space:nowrap;">%</div><div style="position:absolute;left:1705px;top:174px;width:201px;height:17px;background:#000"></div><div style="position:absolute;left:1706px;top:175px;width:16px;height:15px;background:#fff"></div><svg style="position:absolute;left:1706px;top:175px;" width="16" height="15" viewBox="1706 175 16 15"><path d="M1706,190 L1722,175" stroke="#c81848" stroke-width="2"/></svg><div style="position:absolute;left:1722px;top:175px;width:168px;height:15px;background:linear-gradient(90deg,#e02020,#f0a020 15%,#f0f020 22%,#40c040 38%,#20a060 48%,#40c0f0 58%,#3030b0 72%,#a030a0 84%,#e02060 95%,#e02020)"></div><div style="position:absolute;left:1722px;top:175px;width:168px;height:15px;background:linear-gradient(rgba(255,255,255,0.35),rgba(255,255,255,0) 40%,rgba(0,0,0,0) 55%,rgba(0,0,0,0.95))"></div><div style="position:absolute;left:1890px;top:175px;width:15px;height:8px;background:#fff"></div><div style="position:absolute;left:1701px;top:199px;width:214px;height:3px;background:#3a3a3a"></div><div style="position:absolute;left:1701px;top:202px;width:214px;height:17px;background:linear-gradient(#888,#9a9a9a);border-bottom:1px solid #5a5a5a"></div><div style="position:absolute;left:1701px;top:202px;width:41px;height:17px;background:linear-gradient(#a0a0a0,#acacac);border-top:1px solid #6a6a6a;border-left:1px solid #6a6a6a;border-bottom:1px solid #5a5a5a"></div><div style="position:absolute;left:1708px;top:205.97px;font-size:10.2px;line-height:10.2px;color:#1e1e1e;font-weight:normal;white-space:nowrap;-webkit-text-stroke:0.25px currentColor">Pinsel</div><div style="position:absolute;left:1742px;top:202px;width:56px;height:18px;background:linear-gradient(#ececec,#d8d8d8)"></div><div style="position:absolute;left:1749px;top:205.97px;font-size:10.2px;line-height:10.2px;color:#1e2430;font-weight:normal;white-space:nowrap;-webkit-text-stroke:0.25px currentColor">Symbole</div><div style="position:absolute;left:1798px;top:202px;width:63px;height:17px;background:linear-gradient(#a0a0a0,#acacac);border-top:1px solid #6a6a6a;border-left:1px solid #6a6a6a;border-bottom:1px solid #5a5a5a"></div><div style="position:absolute;left:1805px;top:205.97px;font-size:10.2px;line-height:10.2px;color:#1e1e1e;font-weight:normal;white-space:nowrap;-webkit-text-stroke:0.25px currentColor">Grafikstile</div><svg style="position:absolute;left:1895px;top:205px;" width="18" height="11" viewBox="1895 205 18 11"><path d="M1896,209.5 L1900.5,209.5 L1898.25,212 Z" fill="#222"/><path d="M1902,207.5 H1911 M1902,210.5 H1911 M1902,213.5 H1911" stroke="#222" stroke-width="1.2"/></svg><div style="position:absolute;left:1701px;top:219px;width:214px;height:216px;background:#d6d6d6"></div><div style="position:absolute;left:1701px;top:219px;width:214px;height:1px;background:#f0f0f0"></div><div style="position:absolute;left:1703px;top:220px;width:210px;height:1px;background:#111"></div><div style="position:absolute;left:1703px;top:221px;width:195px;height:196px;background:#d8d8d8"></div><div style="position:absolute;left:1897px;top:221px;width:1px;height:197px;background:#f8f8f8"></div><div style="position:absolute;left:1898px;top:221px;width:16px;height:197px;background:#f2f2f2"></div><svg style="position:absolute;left:1903px;top:227px;" width="8" height="5" viewBox="1903 227 8 5"><path d="M1903,232 L1907,228 L1911,232 Z" fill="#888"/></svg><svg style="position:absolute;left:1903px;top:406px;" width="8" height="5" viewBox="1903 406 8 5"><path d="M1903,407 L1907,411 L1911,407 Z" fill="#888"/></svg><div style="position:absolute;left:1703px;top:417px;width:195px;height:1px;background:#111"></div><svg style="position:absolute;left:1702px;top:418px;" width="212" height="17" viewBox="1702 418 212 17"><rect x="1712.5" y="420.5" width="9" height="8" fill="#e8e8e8" stroke="#555"/><rect x="1715.5" y="423.5" width="9" height="8" fill="#bbb" stroke="#222"/><path d="M1718.5,424 V431 M1721.5,424 V431 M1716,427.5 H1724" stroke="#fff" stroke-width="0.8"/><path d="M1726,432 L1729,432 L1729,429 Z" fill="#111"/><path d="M1751,421 Q1755,425 1759,425" fill="none" stroke="#555" stroke-width="2.2"/><path d="M1758,421.5 L1762.5,425 L1758,428.5 Z" fill="#555"/><ellipse cx="1784" cy="426" rx="5" ry="2.3" fill="#ddd" stroke="#666" stroke-width="1"/><ellipse cx="1792" cy="426" rx="5" ry="2.3" fill="#ddd" stroke="#666" stroke-width="1"/><path d="M1785,420.5 h1 M1788,420 h1 M1791,420.5 h1 M1785,431 h1 M1788,431.5 h1 M1791,431 h1" stroke="#777"/><rect x="1814.5" y="420.5" width="12" height="10" fill="#d4d4d4" stroke="#888"/><rect x="1816" y="424" width="9" height="1.5" fill="#f4f4f4"/><rect x="1816" y="427" width="9" height="1.5" fill="#f4f4f4"/><rect x="1848.5" y="420.5" width="9" height="9" fill="#fff" stroke="#222" stroke-width="1.1"/><rect x="1849" y="425" width="4" height="4" fill="#555"/><path d="M1853,425 h2 v2" fill="none" stroke="#222"/><path d="M1880,422 H1888 M1882,420.5 H1886" stroke="#666" stroke-width="1"/><rect x="1881.5" y="423.5" width="6" height="7" fill="#eee" stroke="#666"/><path d="M1883.5,425 v4 M1885.5,425 v4" stroke="#888"/><rect x="1911.0" y="431.0" width="1.3" height="1.3" fill="#8a8a8a"/><rect x="1908.5" y="431.0" width="1.3" height="1.3" fill="#8a8a8a"/><rect x="1906.0" y="431.0" width="1.3" height="1.3" fill="#8a8a8a"/><rect x="1903.5" y="431.0" width="1.3" height="1.3" fill="#8a8a8a"/><rect x="1911.0" y="428.5" width="1.3" height="1.3" fill="#8a8a8a"/><rect x="1908.5" y="428.5" width="1.3" height="1.3" fill="#8a8a8a"/><rect x="1906.0" y="428.5" width="1.3" height="1.3" fill="#8a8a8a"/><rect x="1911.0" y="426.0" width="1.3" height="1.3" fill="#8a8a8a"/><rect x="1908.5" y="426.0" width="1.3" height="1.3" fill="#8a8a8a"/><rect x="1911.0" y="423.5" width="1.3" height="1.3" fill="#8a8a8a"/></svg><div style="position:absolute;left:1701px;top:435px;width:214px;height:3px;background:#3a3a3a"></div><div style="position:absolute;left:1701px;top:438px;width:214px;height:17px;background:linear-gradient(#888,#9a9a9a);border-bottom:1px solid #5a5a5a"></div><div style="position:absolute;left:1701px;top:438px;width:47px;height:18px;background:linear-gradient(#ececec,#d8d8d8)"></div><div style="position:absolute;left:1709px;top:441.97px;font-size:10.2px;line-height:10.2px;color:#1e2430;font-weight:normal;white-space:nowrap;-webkit-text-stroke:0.25px currentColor">Ebenen</div><div style="position:absolute;left:1748px;top:438px;width:50px;height:17px;background:linear-gradient(#a0a0a0,#acacac);border-top:1px solid #6a6a6a;border-left:1px solid #6a6a6a;border-bottom:1px solid #5a5a5a"></div><div style="position:absolute;left:1756px;top:441.97px;font-size:10.2px;line-height:10.2px;color:#1e1e1e;font-weight:normal;white-space:nowrap;-webkit-text-stroke:0.25px currentColor">Zeichen</div><div style="position:absolute;left:1798px;top:438px;width:46px;height:17px;background:linear-gradient(#a0a0a0,#acacac);border-top:1px solid #6a6a6a;border-left:1px solid #6a6a6a;border-bottom:1px solid #5a5a5a"></div><div style="position:absolute;left:1805px;top:441.97px;font-size:10.2px;line-height:10.2px;color:#1e1e1e;font-weight:normal;white-space:nowrap;-webkit-text-stroke:0.25px currentColor">Absatz</div><svg style="position:absolute;left:1895px;top:441px;" width="18" height="11" viewBox="1895 441 18 11"><path d="M1896,445.5 L1900.5,445.5 L1898.25,448 Z" fill="#222"/><path d="M1902,443.5 H1911 M1902,446.5 H1911 M1902,449.5 H1911" stroke="#222" stroke-width="1.2"/></svg><div style="position:absolute;left:1701px;top:455px;width:214px;height:215px;background:#d6d6d6"></div><div style="position:absolute;left:1701px;top:455px;width:214px;height:1px;background:#f0f0f0"></div><div style="position:absolute;left:1703px;top:456px;width:210px;height:1px;background:#111"></div><div style="position:absolute;left:1703px;top:457px;width:195px;height:195px;background:#d8d8d8"></div><div style="position:absolute;left:1897px;top:457px;width:1px;height:196px;background:#f8f8f8"></div><div style="position:absolute;left:1898px;top:457px;width:16px;height:196px;background:#f2f2f2"></div><svg style="position:absolute;left:1903px;top:463px;" width="8" height="5" viewBox="1903 463 8 5"><path d="M1903,468 L1907,464 L1911,468 Z" fill="#888"/></svg><svg style="position:absolute;left:1903px;top:641px;" width="8" height="5" viewBox="1903 641 8 5"><path d="M1903,642 L1907,646 L1911,642 Z" fill="#888"/></svg><div style="position:absolute;left:1703px;top:457px;width:44px;height:19px;background:#d4d4d4"></div><div style="position:absolute;left:1706px;top:459px;width:13px;height:15px;background:#e2e2e2;border:1px solid #c8c8c8"></div><div style="position:absolute;left:1722px;top:459px;width:13px;height:15px;background:#e2e2e2;border:1px solid #c8c8c8"></div><svg style="position:absolute;left:1706px;top:462px;" width="13" height="9" viewBox="1706 462 13 9"><path d="M1707,466.5 Q1712.5,461 1718,466.5 Q1712.5,472 1707,466.5 Z" fill="#fff" stroke="#111" stroke-width="1.3"/><circle cx="1712.5" cy="466.5" r="2.3" fill="#111"/></svg><div style="position:absolute;left:1739px;top:460px;width:4px;height:13px;background:#4a4ae8"></div><div style="position:absolute;left:1747px;top:457px;width:1px;height:20px;background:#111"></div><div style="position:absolute;left:1748px;top:457px;width:150px;height:19px;background:#d6d6d6;border-bottom:1px solid #e8e8e8"></div><svg style="position:absolute;left:1750px;top:462px;" width="10" height="10" viewBox="1750 462 10 10"><path d="M1751.5,462.5 L1757.5,467 L1751.5,471.5 Z" fill="#fff" stroke="#8a8aa8" stroke-width="1"/></svg><div style="position:absolute;left:1763px;top:458px;width:134px;height:19px;background:#3399f5"></div><svg style="position:absolute;left:1890px;top:458px;" width="7" height="7" viewBox="1890 458 7 7"><path d="M1890,458 H1897 V465 Z" fill="#111"/></svg><div style="position:absolute;left:1889px;top:464px;width:5px;height:5px;background:#4848f0"></div><div style="position:absolute;left:1765px;top:459px;width:16px;height:16px;background:#fff;border:1.3px solid #111"></div><svg style="position:absolute;left:1766px;top:460px;" width="14" height="14" viewBox="1766 460 14 14"><path d="M1777,472 V465 A4,4 0 1 0 1775,468" fill="none" stroke="#666" stroke-width="1.3"/></svg><div style="position:absolute;left:1785.5px;top:461.95px;font-size:10.1px;line-height:10.1px;color:#fff;font-weight:bold;white-space:nowrap;">Meine Ebene</div><svg style="position:absolute;left:1873px;top:462px;" width="11" height="11" viewBox="1873 462 11 11"><circle cx="1878.5" cy="467.5" r="4.3" fill="none" stroke="#333" stroke-width="1.1"/></svg><div style="position:absolute;left:1703px;top:477px;width:44px;height:19px;background:#d4d4d4"></div><div style="position:absolute;left:1706px;top:479px;width:13px;height:15px;background:#e2e2e2;border:1px solid #c8c8c8"></div><div style="position:absolute;left:1722px;top:479px;width:13px;height:15px;background:#e2e2e2;border:1px solid #c8c8c8"></div><svg style="position:absolute;left:1706px;top:482px;" width="13" height="9" viewBox="1706 482 13 9"><path d="M1707,486.5 Q1712.5,481 1718,486.5 Q1712.5,492 1707,486.5 Z" fill="#fff" stroke="#111" stroke-width="1.3"/><circle cx="1712.5" cy="486.5" r="2.3" fill="#111"/></svg><svg style="position:absolute;left:1723px;top:480px;" width="12" height="13" viewBox="1723 480 12 13"><path d="M1726,487 V484 A2.5,2.5 0 0 1 1731,484 V487" fill="none" stroke="#222" stroke-width="1.4"/><rect x="1724.5" y="486.5" width="8" height="6" fill="#222"/></svg><div style="position:absolute;left:1739px;top:480px;width:4px;height:13px;background:#44dd44"></div><div style="position:absolute;left:1747px;top:477px;width:1px;height:20px;background:#111"></div><div style="position:absolute;left:1748px;top:477px;width:150px;height:19px;background:#d6d6d6;border-bottom:1px solid #e8e8e8"></div><svg style="position:absolute;left:1750px;top:482px;" width="10" height="10" viewBox="1750 482 10 10"><path d="M1751.5,482.5 L1757.5,487 L1751.5,491.5 Z" fill="#fff" stroke="#8a8aa8" stroke-width="1"/></svg><div style="position:absolute;left:1765px;top:479px;width:16px;height:16px;background:#fff;border:1.3px solid #111"></div><div style="position:absolute;left:1785.5px;top:481.95px;font-size:10.1px;line-height:10.1px;color:#111;font-weight:normal;white-space:nowrap;">Textbereich ausbl...</div><svg style="position:absolute;left:1873px;top:482px;" width="11" height="11" viewBox="1873 482 11 11"><circle cx="1878.5" cy="487.5" r="4.3" fill="none" stroke="#333" stroke-width="1.1"/></svg><div style="position:absolute;left:1703px;top:497px;width:44px;height:19px;background:#d4d4d4"></div><div style="position:absolute;left:1706px;top:499px;width:13px;height:15px;background:#e2e2e2;border:1px solid #c8c8c8"></div><div style="position:absolute;left:1722px;top:499px;width:13px;height:15px;background:#e2e2e2;border:1px solid #c8c8c8"></div><div style="position:absolute;left:1739px;top:500px;width:4px;height:13px;background:#f08030"></div><div style="position:absolute;left:1747px;top:497px;width:1px;height:20px;background:#111"></div><div style="position:absolute;left:1748px;top:497px;width:150px;height:19px;background:#d6d6d6;border-bottom:1px solid #e8e8e8"></div><svg style="position:absolute;left:1750px;top:502px;" width="10" height="10" viewBox="1750 502 10 10"><path d="M1751.5,502.5 L1757.5,507 L1751.5,511.5 Z" fill="#fff" stroke="#8a8aa8" stroke-width="1"/></svg><div style="position:absolute;left:1765px;top:499px;width:16px;height:16px;background:#fff;border:1.3px solid #111"></div><div style="position:absolute;left:1785.5px;top:501.95px;font-size:10.1px;line-height:10.1px;color:#111;font-weight:normal;white-space:nowrap;">Anschnitt/Falzlini...</div><svg style="position:absolute;left:1873px;top:502px;" width="11" height="11" viewBox="1873 502 11 11"><circle cx="1878.5" cy="507.5" r="4.3" fill="none" stroke="#333" stroke-width="1.1"/></svg><div style="position:absolute;left:1703px;top:516px;width:195px;height:1px;background:#111"></div><div style="position:absolute;left:1703px;top:652px;width:195px;height:1px;background:#111"></div><div style="position:absolute;left:1712px;top:655.17px;font-size:10.2px;line-height:10.2px;color:#222;font-weight:normal;white-space:nowrap;">3 Ebenen</div><svg style="position:absolute;left:1780px;top:653px;" width="112" height="17" viewBox="1780 653 112 17"><circle cx="1790" cy="662" r="4.3" fill="#fff" stroke="#222" stroke-width="1.2"/><path d="M1790,662 V658 A4,4 0 0 0 1786,662 Z" fill="#111"/><rect x="1783" y="655" width="4" height="4" fill="none" stroke="#999" stroke-dasharray="1,1"/><path d="M1812,659 H1818 M1816,657 L1818,659 L1816,661" fill="none" stroke="#222" stroke-width="1.2"/><rect x="1819.5" y="656.5" width="7" height="9" fill="#fff" stroke="#222" stroke-width="1.2"/><rect x="1820" y="661" width="4" height="4" fill="#222"/><rect x="1846.5" y="656.5" width="8" height="9" fill="#fff" stroke="#222" stroke-width="1.2"/><rect x="1847" y="661" width="4" height="4" fill="#222"/><rect x="1879.5" y="658.5" width="7" height="9" fill="#eee" stroke="#333"/><path d="M1878,657 H1888 M1881,656 H1885" stroke="#333"/></svg><svg style="position:absolute;left:1900px;top:655px;" width="14" height="14" viewBox="1900 655 14 14"><rect x="1911.0" y="666.0" width="1.3" height="1.3" fill="#8a8a8a"/><rect x="1908.5" y="666.0" width="1.3" height="1.3" fill="#8a8a8a"/><rect x="1906.0" y="666.0" width="1.3" height="1.3" fill="#8a8a8a"/><rect x="1903.5" y="666.0" width="1.3" height="1.3" fill="#8a8a8a"/><rect x="1911.0" y="663.5" width="1.3" height="1.3" fill="#8a8a8a"/><rect x="1908.5" y="663.5" width="1.3" height="1.3" fill="#8a8a8a"/><rect x="1906.0" y="663.5" width="1.3" height="1.3" fill="#8a8a8a"/><rect x="1911.0" y="661.0" width="1.3" height="1.3" fill="#8a8a8a"/><rect x="1908.5" y="661.0" width="1.3" height="1.3" fill="#8a8a8a"/><rect x="1911.0" y="658.5" width="1.3" height="1.3" fill="#8a8a8a"/></svg><div style="position:absolute;left:1701px;top:670px;width:214px;height:3px;background:#3a3a3a"></div><div style="position:absolute;left:1701px;top:673px;width:214px;height:17px;background:linear-gradient(#888,#9a9a9a);border-bottom:1px solid #5a5a5a"></div><div style="position:absolute;left:1701px;top:673px;width:59px;height:18px;background:linear-gradient(#ececec,#d8d8d8)"></div><div style="position:absolute;left:1714px;top:676.97px;font-size:10.2px;line-height:10.2px;color:#1e2430;font-weight:normal;white-space:nowrap;-webkit-text-stroke:0.25px currentColor">Verlauf</div><div style="position:absolute;left:1760px;top:673px;width:70px;height:17px;background:linear-gradient(#a0a0a0,#acacac);border-top:1px solid #6a6a6a;border-left:1px solid #6a6a6a;border-bottom:1px solid #5a5a5a"></div><div style="position:absolute;left:1767px;top:676.97px;font-size:10.2px;line-height:10.2px;color:#1e1e1e;font-weight:normal;white-space:nowrap;-webkit-text-stroke:0.25px currentColor">Transparenz</div><svg style="position:absolute;left:1895px;top:676px;" width="18" height="11" viewBox="1895 676 18 11"><path d="M1896,680.5 L1900.5,680.5 L1898.25,683 Z" fill="#222"/><path d="M1902,678.5 H1911 M1902,681.5 H1911 M1902,684.5 H1911" stroke="#222" stroke-width="1.2"/></svg><svg style="position:absolute;left:1703px;top:676px;" width="8" height="11" viewBox="1703 676 8 11"><path d="M1704,681 L1707,678 L1710,681 M1704,683 L1707,686 L1710,683" fill="none" stroke="#333" stroke-width="1.3"/></svg><div style="position:absolute;left:1701px;top:690px;width:214px;height:244px;background:#d6d6d6"></div><div style="position:absolute;left:1709px;top:696px;width:28px;height:28px;background:linear-gradient(90deg,#fff,#111);border:1.3px solid #111"></div><div style="position:absolute;left:1739px;top:695px;width:9px;height:29px;background:linear-gradient(#c8c8c8,#e8e8e8);border:1px solid #999"></div><svg style="position:absolute;left:1740px;top:708px;" width="7" height="4" viewBox="1740 708 7 4"><path d="M1740,708 L1747,708 L1743.5,712 Z" fill="#111"/></svg><div style="position:absolute;left:1752px;top:702.91px;font-size:10.5px;line-height:10.5px;color:#1a1a1a;font-weight:bold;white-space:nowrap;">Art:</div><div style="position:absolute;left:1771px;top:699px;width:121px;height:17px;background:#fff;border:1px solid #e0e0e0"></div><svg style="position:absolute;left:1881px;top:706px;" width="8" height="5" viewBox="1881 706 8 5"><path d="M1881,706 L1889,706 L1885.0,711 Z" fill="#111"/></svg><svg style="position:absolute;left:1713px;top:731px;" width="19" height="17" viewBox="1713 731 19 17"><rect x="1714" y="733" width="7" height="5" fill="#777"/><path d="M1723,734 H1727 V739 M1725,737 L1727,739 L1729,737 M1721,746 H1717 V741 M1715,743 L1717,741 L1719,743" fill="none" stroke="#555" stroke-width="1"/><rect x="1723" y="741" width="7" height="5" fill="#888"/></svg><svg style="position:absolute;left:1753px;top:733px;" width="13" height="12" viewBox="1753 733 13 12"><path d="M1754,743.5 L1763,743.5 L1760,734 Z" fill="none" stroke="#333" stroke-width="1.1"/></svg><div style="position:absolute;left:1769px;top:730px;width:45px;height:19px;background:#d8d8d8;border:1px solid #f4f4f4;outline:1px solid #c0c0c0"></div><div style="position:absolute;left:1797px;top:731px;width:16px;height:17px;background:#e4e4e4;border-left:1px solid #c4c4c4"></div><svg style="position:absolute;left:1803px;top:735px;" width="6" height="9" viewBox="1803 735 6 9"><path d="M1804,735.5 L1808,739.5 L1804,743.5 Z" fill="#999"/></svg><div style="position:absolute;left:1816px;top:729.33px;font-size:10px;line-height:10px;color:#888;font-weight:normal;white-space:nowrap;">°</div><svg style="position:absolute;left:1826px;top:731px;" width="18" height="18" viewBox="1826 731 18 18"><path d="M1828,733 V746 M1826.5,735 L1828,733 L1829.5,735 M1826.5,744 L1828,746 L1829.5,744" fill="none" stroke="#111" stroke-width="1.1"/><ellipse cx="1836" cy="738" rx="5" ry="3.5" fill="#ddd" stroke="#333"/><path d="M1830,746 H1842" stroke="#444" stroke-dasharray="1,1"/></svg><div style="position:absolute;left:1845px;top:731px;width:47px;height:17px;background:#d8d8d8;border:1px solid #f4f4f4;outline:1px solid #c0c0c0"></div><div style="position:absolute;left:1894px;top:735.33px;font-size:10px;line-height:10px;color:#aaa;font-weight:normal;white-space:nowrap;">%</div><div style="position:absolute;left:1711px;top:760px;width:167px;height:90px;background:linear-gradient(90deg,#ffffff,#d4d4d4 25%,#9a9a9a 50%,#5c5c5c 75%,#000);border:1.3px solid #000"></div><svg style="position:absolute;left:1883px;top:762px;" width="13" height="14" viewBox="1883 762 13 14"><rect x="1885.5" y="766.5" width="8" height="9" fill="#e4e4e4" stroke="#999"/><path d="M1884,765 H1895 M1887,763.5 H1892" stroke="#999"/><path d="M1888,768 V774 M1891,768 V774" stroke="#aaa"/></svg><div style="position:absolute;left:1719px;top:879.67px;font-size:10.2px;line-height:10.2px;color:#a6a6a6;font-weight:normal;white-space:nowrap;">Deckkraft:</div><div style="position:absolute;left:1769px;top:874px;width:45px;height:19px;background:#d8d8d8;border:1px solid #f4f4f4;outline:1px solid #c4c4c4"></div><div style="position:absolute;left:1797px;top:875px;width:16px;height:17px;background:#e4e4e4"></div><svg style="position:absolute;left:1803px;top:879px;" width="6" height="9" viewBox="1803 879 6 9"><path d="M1804,879.5 L1808,883.5 L1804,887.5 Z" fill="#888"/></svg><div style="position:absolute;left:1816px;top:880.17px;font-size:10.2px;line-height:10.2px;color:#a6a6a6;font-weight:normal;white-space:nowrap;">%</div><div style="position:absolute;left:1728px;top:903.17px;font-size:10.2px;line-height:10.2px;color:#a6a6a6;font-weight:normal;white-space:nowrap;">Position:</div><div style="position:absolute;left:1769px;top:898px;width:45px;height:19px;background:#d8d8d8;border:1px solid #f4f4f4;outline:1px solid #c4c4c4"></div><div style="position:absolute;left:1797px;top:899px;width:16px;height:17px;background:#e4e4e4"></div><svg style="position:absolute;left:1803px;top:903px;" width="6" height="9" viewBox="1803 903 6 9"><path d="M1804,903.5 L1808,907.5 L1804,911.5 Z" fill="#888"/></svg><div style="position:absolute;left:1816px;top:904.17px;font-size:10.2px;line-height:10.2px;color:#a6a6a6;font-weight:normal;white-space:nowrap;">%</div><div style="position:absolute;left:1701px;top:934px;width:214px;height:3px;background:#3a3a3a"></div><div style="position:absolute;left:1701px;top:937px;width:214px;height:17px;background:linear-gradient(#888,#9a9a9a);border-bottom:1px solid #5a5a5a"></div><div style="position:absolute;left:1701px;top:937px;width:56px;height:17px;background:linear-gradient(#a0a0a0,#acacac);border-top:1px solid #6a6a6a;border-left:1px solid #6a6a6a;border-bottom:1px solid #5a5a5a"></div><div style="position:absolute;left:1708px;top:940.97px;font-size:10.2px;line-height:10.2px;color:#1e1e1e;font-weight:normal;white-space:nowrap;-webkit-text-stroke:0.25px currentColor">Aussehen</div><div style="position:absolute;left:1757px;top:937px;width:60px;height:17px;background:linear-gradient(#a0a0a0,#acacac);border-top:1px solid #6a6a6a;border-left:1px solid #6a6a6a;border-bottom:1px solid #5a5a5a"></div><div style="position:absolute;left:1764px;top:940.97px;font-size:10.2px;line-height:10.2px;color:#1e1e1e;font-weight:normal;white-space:nowrap;-webkit-text-stroke:0.25px currentColor">Ausrichten</div><div style="position:absolute;left:1817px;top:937px;width:58px;height:18px;background:linear-gradient(#ececec,#d8d8d8)"></div><div style="position:absolute;left:1823px;top:940.97px;font-size:10.2px;line-height:10.2px;color:#1e2430;font-weight:normal;white-space:nowrap;-webkit-text-stroke:0.25px currentColor">Pathfinder</div><svg style="position:absolute;left:1895px;top:940px;" width="18" height="11" viewBox="1895 940 18 11"><path d="M1896,944.5 L1900.5,944.5 L1898.25,947 Z" fill="#222"/><path d="M1902,942.5 H1911 M1902,945.5 H1911 M1902,948.5 H1911" stroke="#222" stroke-width="1.2"/></svg><div style="position:absolute;left:1701px;top:954px;width:214px;height:80px;background:#d6d6d6"></div><div style="position:absolute;left:1707.5px;top:958.67px;font-size:10.2px;line-height:10.2px;color:#111;font-weight:normal;white-space:nowrap;">Formmodi:</div><svg style="position:absolute;left:1710px;top:972px;" width="120" height="16" viewBox="1710 972 120 16"><rect x="1714.0" y="974.5" width="8" height="8" fill="#ddd" stroke="#777"/><rect x="1718.0" y="978.5" width="8" height="8" fill="#ccc" stroke="#555"/><rect x="1750.0" y="978.5" width="8" height="8" fill="#e4e4e4" stroke="#aaa"/><path d="M1746.0,982.5 V974.5 H1754.0 V978.5 H1750.0 V982.5 Z" fill="#ccc" stroke="#444"/><rect x="1778.0" y="974.5" width="8" height="8" fill="#eee" stroke="#777"/><rect x="1782.0" y="978.5" width="8" height="8" fill="#eee" stroke="#777"/><rect x="1781.5" y="978" width="5" height="5" fill="#111"/><rect x="1810.0" y="974.5" width="8" height="8" fill="#888" stroke="#444"/><rect x="1814.0" y="978.5" width="8" height="8" fill="#555" stroke="#222"/></svg><div style="position:absolute;left:1836px;top:973px;width:69px;height:18px;background:linear-gradient(#fafafa,#e8e8e8);border:1px solid #c4c4c4;border-radius:3px"></div><div style="position:absolute;left:1844px;top:978.17px;font-size:10.2px;line-height:10.2px;color:#9a9a9a;font-weight:normal;white-space:nowrap;">Umwandeln</div><div style="position:absolute;left:1707.5px;top:996.67px;font-size:10.2px;line-height:10.2px;color:#111;font-weight:normal;white-space:nowrap;">Pathfinder:</div><svg style="position:absolute;left:1710px;top:1010px;" width="180" height="24" viewBox="1710 1010 180 24"><circle cx="1722.5" cy="1021" r="4.5" fill="#eee" stroke="#222" stroke-width="1"/><rect x="1714.0" y="1012.5" width="8" height="8" fill="#f4f4f4" stroke="#111" stroke-width="1"/><circle cx="1754.5" cy="1021" r="4.5" fill="#eee" stroke="#222" stroke-width="1"/><rect x="1746.0" y="1012.5" width="8" height="8" fill="#f4f4f4" stroke="#111" stroke-width="1"/><circle cx="1787" cy="1021" r="4.5" fill="#eee" stroke="#222" stroke-width="1"/><rect x="1778.5" y="1012.5" width="8" height="8" fill="#f4f4f4" stroke="#111" stroke-width="1"/><circle cx="1819.3" cy="1021" r="4.5" fill="#eee" stroke="#222" stroke-width="1"/><rect x="1810.8" y="1012.5" width="8" height="8" fill="#f4f4f4" stroke="#111" stroke-width="1"/><circle cx="1851.3" cy="1021" r="4.5" fill="#eee" stroke="#222" stroke-width="1"/><rect x="1842.8" y="1012.5" width="8" height="8" fill="#f4f4f4" stroke="#111" stroke-width="1"/><path d="M1873.0,1021.5 V1012.5 H1882.0 V1017 Q1877.5,1017 1876.5,1021.5 Z" fill="#f4f4f4" stroke="#111"/></svg><svg width="1603" height="915" viewBox="81 105 1603 915" style="position:absolute;left:81px;top:105px" shape-rendering="crispEdges"><rect x="81" y="105" width="658" height="915" fill="#f4f4f4"/><rect x="739" y="105" width="945" height="915" fill="#ffffff"/><rect x="81" y="105" width="1" height="915" fill="#e1e1e1"/><rect x="105" y="105" width="1" height="915" fill="#c9c9c9"/><rect x="128" y="105" width="1" height="915" fill="#e1e1e1"/><rect x="152" y="105" width="1" height="915" fill="#e1e1e1"/><rect x="175" y="105" width="1" height="915" fill="#e1e1e1"/><rect x="198" y="105" width="1" height="915" fill="#e1e1e1"/><rect x="222" y="105" width="1" height="915" fill="#c9c9c9"/><rect x="245" y="105" width="1" height="915" fill="#e1e1e1"/><rect x="269" y="105" width="1" height="915" fill="#e1e1e1"/><rect x="292" y="105" width="1" height="915" fill="#e1e1e1"/><rect x="316" y="105" width="1" height="915" fill="#e1e1e1"/><rect x="339" y="105" width="1" height="915" fill="#c9c9c9"/><rect x="363" y="105" width="1" height="915" fill="#e1e1e1"/><rect x="386" y="105" width="1" height="915" fill="#e1e1e1"/><rect x="410" y="105" width="1" height="915" fill="#e1e1e1"/><rect x="433" y="105" width="1" height="915" fill="#e1e1e1"/><rect x="456" y="105" width="1" height="915" fill="#c9c9c9"/><rect x="480" y="105" width="1" height="915" fill="#e1e1e1"/><rect x="503" y="105" width="1" height="915" fill="#e1e1e1"/><rect x="527" y="105" width="1" height="915" fill="#e1e1e1"/><rect x="550" y="105" width="1" height="915" fill="#e1e1e1"/><rect x="574" y="105" width="1" height="915" fill="#c9c9c9"/><rect x="597" y="105" width="1" height="915" fill="#e1e1e1"/><rect x="621" y="105" width="1" height="915" fill="#e1e1e1"/><rect x="644" y="105" width="1" height="915" fill="#e1e1e1"/><rect x="667" y="105" width="1" height="915" fill="#e1e1e1"/><rect x="691" y="105" width="1" height="915" fill="#c9c9c9"/><rect x="714" y="105" width="1" height="915" fill="#e1e1e1"/><rect x="738" y="105" width="1" height="915" fill="#e1e1e1"/><rect x="761" y="105" width="1" height="915" fill="#e1e1e1"/><rect x="785" y="105" width="1" height="915" fill="#e1e1e1"/><rect x="808" y="105" width="1" height="915" fill="#c9c9c9"/><rect x="832" y="105" width="1" height="915" fill="#e1e1e1"/><rect x="855" y="105" width="1" height="915" fill="#e1e1e1"/><rect x="879" y="105" width="1" height="915" fill="#e1e1e1"/><rect x="902" y="105" width="1" height="915" fill="#e1e1e1"/><rect x="925" y="105" width="1" height="915" fill="#c9c9c9"/><rect x="949" y="105" width="1" height="915" fill="#e1e1e1"/><rect x="972" y="105" width="1" height="915" fill="#e1e1e1"/><rect x="996" y="105" width="1" height="915" fill="#e1e1e1"/><rect x="1019" y="105" width="1" height="915" fill="#e1e1e1"/><rect x="1043" y="105" width="1" height="915" fill="#c9c9c9"/><rect x="1066" y="105" width="1" height="915" fill="#e1e1e1"/><rect x="1090" y="105" width="1" height="915" fill="#e1e1e1"/><rect x="1113" y="105" width="1" height="915" fill="#e1e1e1"/><rect x="1136" y="105" width="1" height="915" fill="#e1e1e1"/><rect x="1160" y="105" width="1" height="915" fill="#c9c9c9"/><rect x="1183" y="105" width="1" height="915" fill="#e1e1e1"/><rect x="1207" y="105" width="1" height="915" fill="#e1e1e1"/><rect x="1230" y="105" width="1" height="915" fill="#e1e1e1"/><rect x="1254" y="105" width="1" height="915" fill="#e1e1e1"/><rect x="1277" y="105" width="1" height="915" fill="#c9c9c9"/><rect x="1301" y="105" width="1" height="915" fill="#e1e1e1"/><rect x="1324" y="105" width="1" height="915" fill="#e1e1e1"/><rect x="1348" y="105" width="1" height="915" fill="#e1e1e1"/><rect x="1371" y="105" width="1" height="915" fill="#e1e1e1"/><rect x="1394" y="105" width="1" height="915" fill="#c9c9c9"/><rect x="1418" y="105" width="1" height="915" fill="#e1e1e1"/><rect x="1441" y="105" width="1" height="915" fill="#e1e1e1"/><rect x="1465" y="105" width="1" height="915" fill="#e1e1e1"/><rect x="1488" y="105" width="1" height="915" fill="#e1e1e1"/><rect x="1512" y="105" width="1" height="915" fill="#c9c9c9"/><rect x="1535" y="105" width="1" height="915" fill="#e1e1e1"/><rect x="1559" y="105" width="1" height="915" fill="#e1e1e1"/><rect x="1582" y="105" width="1" height="915" fill="#e1e1e1"/><rect x="1605" y="105" width="1" height="915" fill="#e1e1e1"/><rect x="1629" y="105" width="1" height="915" fill="#c9c9c9"/><rect x="1652" y="105" width="1" height="915" fill="#e1e1e1"/><rect x="1676" y="105" width="1" height="915" fill="#e1e1e1"/><rect x="81" y="105" width="1603" height="1" fill="#e1e1e1"/><rect x="81" y="128" width="1603" height="1" fill="#e1e1e1"/><rect x="81" y="151" width="1603" height="1" fill="#e1e1e1"/><rect x="81" y="175" width="1603" height="1" fill="#c9c9c9"/><rect x="81" y="198" width="1603" height="1" fill="#e1e1e1"/><rect x="81" y="222" width="1603" height="1" fill="#e1e1e1"/><rect x="81" y="245" width="1603" height="1" fill="#e1e1e1"/><rect x="81" y="269" width="1603" height="1" fill="#e1e1e1"/><rect x="81" y="292" width="1603" height="1" fill="#c9c9c9"/><rect x="81" y="316" width="1603" height="1" fill="#e1e1e1"/><rect x="81" y="339" width="1603" height="1" fill="#e1e1e1"/><rect x="81" y="363" width="1603" height="1" fill="#e1e1e1"/><rect x="81" y="386" width="1603" height="1" fill="#e1e1e1"/><rect x="81" y="409" width="1603" height="1" fill="#c9c9c9"/><rect x="81" y="433" width="1603" height="1" fill="#e1e1e1"/><rect x="81" y="456" width="1603" height="1" fill="#e1e1e1"/><rect x="81" y="480" width="1603" height="1" fill="#e1e1e1"/><rect x="81" y="503" width="1603" height="1" fill="#e1e1e1"/><rect x="81" y="527" width="1603" height="1" fill="#c9c9c9"/><rect x="81" y="550" width="1603" height="1" fill="#e1e1e1"/><rect x="81" y="574" width="1603" height="1" fill="#e1e1e1"/><rect x="81" y="597" width="1603" height="1" fill="#e1e1e1"/><rect x="81" y="620" width="1603" height="1" fill="#e1e1e1"/><rect x="81" y="644" width="1603" height="1" fill="#c9c9c9"/><rect x="81" y="667" width="1603" height="1" fill="#e1e1e1"/><rect x="81" y="691" width="1603" height="1" fill="#e1e1e1"/><rect x="81" y="714" width="1603" height="1" fill="#e1e1e1"/><rect x="81" y="738" width="1603" height="1" fill="#e1e1e1"/><rect x="81" y="761" width="1603" height="1" fill="#c9c9c9"/><rect x="81" y="785" width="1603" height="1" fill="#e1e1e1"/><rect x="81" y="808" width="1603" height="1" fill="#e1e1e1"/><rect x="81" y="832" width="1603" height="1" fill="#e1e1e1"/><rect x="81" y="855" width="1603" height="1" fill="#e1e1e1"/><rect x="81" y="878" width="1603" height="1" fill="#c9c9c9"/><rect x="81" y="902" width="1603" height="1" fill="#e1e1e1"/><rect x="81" y="925" width="1603" height="1" fill="#e1e1e1"/><rect x="81" y="949" width="1603" height="1" fill="#e1e1e1"/><rect x="81" y="972" width="1603" height="1" fill="#e1e1e1"/><rect x="81" y="996" width="1603" height="1" fill="#c9c9c9"/><rect x="81" y="1019" width="1603" height="1" fill="#e1e1e1"/><rect x="739" y="105" width="1" height="915" fill="#000"/><rect x="799" y="119" width="885" height="1" fill="#7aab7a"/><rect x="799" y="119" width="1" height="915" fill="#7aab7a"/></svg><svg width="1603" height="915" viewBox="81 105 1603 915" style="position:absolute;left:81px;top:105px"><path d="M1040.35,640.43 A281.3,281.3 0 1 1 1160.30,410" fill="none" stroke="#000" stroke-width="4.7"/><path d="M1066.60,996 L1066.60,410 A187.6,187.6 0 1 0 965.33,576.55 C970.66,573.79 976.00,567.90 982,567.9 C988.60,567.90 994.00,573.40 994,580 C994.00,587.00 984.30,593.36 977.22,597.08 A211.3,211.3 0 1 1 1090.30,410 L1090.30,984 A11.60,11.60 0 0 0 1113.50,984 L1113.50,410 A234.5,234.5 0 1 0 992.33,615.30 C997.58,612.40 1002.90,608.00 1008.9,608 C1015.50,608.00 1018.90,614.10 1018.9,620.7 C1018.90,627.70 1010.06,632.26 1003.05,636.11 A257.9,257.9 0 1 1 1136.90,410 L1136.90,984 A11.70,11.70 0 0 0 1160.30,984 L1160.30,410" fill="none" stroke="#000" stroke-width="4.5"/><path d="M1066.60,996 L1066.60,410 A187.6,187.6 0 1 0 965.33,576.55 C970.66,573.79 976.00,567.90 982,567.9 C988.60,567.90 994.00,573.40 994,580 C994.00,587.00 984.30,593.36 977.22,597.08 A211.3,211.3 0 1 1 1090.30,410 L1090.30,984 A11.60,11.60 0 0 0 1113.50,984 L1113.50,410 A234.5,234.5 0 1 0 992.33,615.30 C997.58,612.40 1002.90,608.00 1008.9,608 C1015.50,608.00 1018.90,614.10 1018.9,620.7 C1018.90,627.70 1010.06,632.26 1003.05,636.11 A257.9,257.9 0 1 1 1136.90,410 L1136.90,984 A11.70,11.70 0 0 0 1160.30,984 L1160.30,410" fill="none" stroke="#5050c0" stroke-width="0.9"/><rect x="689.70" y="408.30" width="3.4" height="3.4" fill="#fff" stroke="#4438d8" stroke-width="0.9"/><rect x="877.30" y="220.70" width="3.4" height="3.4" fill="#fff" stroke="#4438d8" stroke-width="0.9"/><rect x="877.30" y="595.90" width="3.4" height="3.4" fill="#fff" stroke="#4438d8" stroke-width="0.9"/><rect x="666.00" y="408.30" width="3.4" height="3.4" fill="#fff" stroke="#4438d8" stroke-width="0.9"/><rect x="877.30" y="197.00" width="3.4" height="3.4" fill="#fff" stroke="#4438d8" stroke-width="0.9"/><rect x="877.30" y="619.60" width="3.4" height="3.4" fill="#fff" stroke="#4438d8" stroke-width="0.9"/><rect x="642.80" y="408.30" width="3.4" height="3.4" fill="#fff" stroke="#4438d8" stroke-width="0.9"/><rect x="877.30" y="173.80" width="3.4" height="3.4" fill="#fff" stroke="#4438d8" stroke-width="0.9"/><rect x="877.30" y="642.80" width="3.4" height="3.4" fill="#fff" stroke="#4438d8" stroke-width="0.9"/><rect x="619.40" y="408.30" width="3.4" height="3.4" fill="#fff" stroke="#4438d8" stroke-width="0.9"/><rect x="877.30" y="150.40" width="3.4" height="3.4" fill="#fff" stroke="#4438d8" stroke-width="0.9"/><rect x="877.30" y="666.20" width="3.4" height="3.4" fill="#fff" stroke="#4438d8" stroke-width="0.9"/><rect x="1064.90" y="408.30" width="3.4" height="3.4" fill="#fff" stroke="#4438d8" stroke-width="0.9"/><rect x="1088.60" y="408.30" width="3.4" height="3.4" fill="#fff" stroke="#4438d8" stroke-width="0.9"/><rect x="1111.80" y="408.30" width="3.4" height="3.4" fill="#fff" stroke="#4438d8" stroke-width="0.9"/><rect x="1135.20" y="408.30" width="3.4" height="3.4" fill="#fff" stroke="#4438d8" stroke-width="0.9"/><rect x="1158.60" y="408.30" width="3.4" height="3.4" fill="#fff" stroke="#4438d8" stroke-width="0.9"/><rect x="963.63" y="574.85" width="3.4" height="3.4" fill="#fff" stroke="#4438d8" stroke-width="0.9"/><rect x="980.30" y="566.20" width="3.4" height="3.4" fill="#fff" stroke="#4438d8" stroke-width="0.9"/><rect x="992.30" y="578.30" width="3.4" height="3.4" fill="#fff" stroke="#4438d8" stroke-width="0.9"/><rect x="975.52" y="595.38" width="3.4" height="3.4" fill="#fff" stroke="#4438d8" stroke-width="0.9"/><rect x="990.63" y="613.60" width="3.4" height="3.4" fill="#fff" stroke="#4438d8" stroke-width="0.9"/><rect x="1007.20" y="606.30" width="3.4" height="3.4" fill="#fff" stroke="#4438d8" stroke-width="0.9"/><rect x="1017.20" y="619.00" width="3.4" height="3.4" fill="#fff" stroke="#4438d8" stroke-width="0.9"/><rect x="1001.35" y="634.41" width="3.4" height="3.4" fill="#fff" stroke="#4438d8" stroke-width="0.9"/><rect x="1065.10" y="994.30" width="3.4" height="3.4" fill="#fff" stroke="#4438d8" stroke-width="0.9"/><rect x="1088.30" y="982.30" width="3.4" height="3.4" fill="#fff" stroke="#4438d8" stroke-width="0.9"/><rect x="1111.90" y="982.30" width="3.4" height="3.4" fill="#fff" stroke="#4438d8" stroke-width="0.9"/><rect x="1100.10" y="994.30" width="3.4" height="3.4" fill="#fff" stroke="#4438d8" stroke-width="0.9"/><rect x="1135.10" y="982.30" width="3.4" height="3.4" fill="#fff" stroke="#4438d8" stroke-width="0.9"/><rect x="1158.50" y="982.30" width="3.4" height="3.4" fill="#fff" stroke="#4438d8" stroke-width="0.9"/><rect x="1146.80" y="994.30" width="3.4" height="3.4" fill="#fff" stroke="#4438d8" stroke-width="0.9"/><rect x="1088.30" y="414.80" width="3.4" height="3.4" fill="#fff" stroke="#4438d8" stroke-width="0.9"/><rect x="888.5" y="571" width="4" height="4" fill="none" stroke="#4a40e0" stroke-width="0.9"/></svg><svg width="1619" height="17" viewBox="65 88 1619 17" style="position:absolute;left:65px;top:88px" shape-rendering="crispEdges"><rect x="65" y="88" width="1619" height="17" fill="#fff"/><rect x="65" y="88" width="1619" height="1" fill="#555"/><rect x="65" y="104" width="1619" height="1" fill="#000"/><rect x="80" y="88" width="1" height="17" fill="#000"/><rect x="82" y="100" width="1" height="4" fill="#000"/><rect x="88" y="101" width="1" height="3" fill="#000"/><rect x="94" y="88" width="1" height="16" fill="#000"/><text x="96" y="99" font-family="Liberation Sans" font-size="9.5" fill="#0c1020" stroke="#0c1020" stroke-width="0.25" shape-rendering="auto">55</text><rect x="100" y="101" width="1" height="3" fill="#000"/><rect x="106" y="100" width="1" height="4" fill="#000"/><rect x="111" y="101" width="1" height="3" fill="#000"/><rect x="117" y="100" width="1" height="4" fill="#000"/><rect x="123" y="101" width="1" height="3" fill="#000"/><rect x="129" y="100" width="1" height="4" fill="#000"/><rect x="135" y="101" width="1" height="3" fill="#000"/><rect x="141" y="100" width="1" height="4" fill="#000"/><rect x="147" y="101" width="1" height="3" fill="#000"/><rect x="152" y="88" width="1" height="16" fill="#000"/><text x="154" y="99" font-family="Liberation Sans" font-size="9.5" fill="#0c1020" stroke="#0c1020" stroke-width="0.25" shape-rendering="auto">50</text><rect x="158" y="101" width="1" height="3" fill="#000"/><rect x="164" y="100" width="1" height="4" fill="#000"/><rect x="170" y="101" width="1" height="3" fill="#000"/><rect x="176" y="100" width="1" height="4" fill="#000"/><rect x="182" y="101" width="1" height="3" fill="#000"/><rect x="188" y="100" width="1" height="4" fill="#000"/><rect x="193" y="101" width="1" height="3" fill="#000"/><rect x="199" y="100" width="1" height="4" fill="#000"/><rect x="205" y="101" width="1" height="3" fill="#000"/><rect x="211" y="88" width="1" height="16" fill="#000"/><text x="213" y="99" font-family="Liberation Sans" font-size="9.5" fill="#0c1020" stroke="#0c1020" stroke-width="0.25" shape-rendering="auto">45</text><rect x="217" y="101" width="1" height="3" fill="#000"/><rect x="223" y="100" width="1" height="4" fill="#000"/><rect x="229" y="101" width="1" height="3" fill="#000"/><rect x="234" y="100" width="1" height="4" fill="#000"/><rect x="240" y="101" width="1" height="3" fill="#000"/><rect x="246" y="100" width="1" height="4" fill="#000"/><rect x="252" y="101" width="1" height="3" fill="#000"/><rect x="258" y="100" width="1" height="4" fill="#000"/><rect x="264" y="101" width="1" height="3" fill="#000"/><rect x="270" y="88" width="1" height="16" fill="#000"/><text x="272" y="99" font-family="Liberation Sans" font-size="9.5" fill="#0c1020" stroke="#0c1020" stroke-width="0.25" shape-rendering="auto">40</text><rect x="275" y="101" width="1" height="3" fill="#000"/><rect x="281" y="100" width="1" height="4" fill="#000"/><rect x="287" y="101" width="1" height="3" fill="#000"/><rect x="293" y="100" width="1" height="4" fill="#000"/><rect x="299" y="101" width="1" height="3" fill="#000"/><rect x="305" y="100" width="1" height="4" fill="#000"/><rect x="311" y="101" width="1" height="3" fill="#000"/><rect x="316" y="100" width="1" height="4" fill="#000"/><rect x="322" y="101" width="1" height="3" fill="#000"/><rect x="328" y="88" width="1" height="16" fill="#000"/><text x="330" y="99" font-family="Liberation Sans" font-size="9.5" fill="#0c1020" stroke="#0c1020" stroke-width="0.25" shape-rendering="auto">35</text><rect x="334" y="101" width="1" height="3" fill="#000"/><rect x="340" y="100" width="1" height="4" fill="#000"/><rect x="346" y="101" width="1" height="3" fill="#000"/><rect x="352" y="100" width="1" height="4" fill="#000"/><rect x="357" y="101" width="1" height="3" fill="#000"/><rect x="363" y="100" width="1" height="4" fill="#000"/><rect x="369" y="101" width="1" height="3" fill="#000"/><rect x="375" y="100" width="1" height="4" fill="#000"/><rect x="381" y="101" width="1" height="3" fill="#000"/><rect x="387" y="88" width="1" height="16" fill="#000"/><text x="389" y="99" font-family="Liberation Sans" font-size="9.5" fill="#0c1020" stroke="#0c1020" stroke-width="0.25" shape-rendering="auto">30</text><rect x="393" y="101" width="1" height="3" fill="#000"/><rect x="398" y="100" width="1" height="4" fill="#000"/><rect x="404" y="101" width="1" height="3" fill="#000"/><rect x="410" y="100" width="1" height="4" fill="#000"/><rect x="416" y="101" width="1" height="3" fill="#000"/><rect x="422" y="100" width="1" height="4" fill="#000"/><rect x="428" y="101" width="1" height="3" fill="#000"/><rect x="434" y="100" width="1" height="4" fill="#000"/><rect x="439" y="101" width="1" height="3" fill="#000"/><rect x="445" y="88" width="1" height="16" fill="#000"/><text x="447" y="99" font-family="Liberation Sans" font-size="9.5" fill="#0c1020" stroke="#0c1020" stroke-width="0.25" shape-rendering="auto">25</text><rect x="451" y="101" width="1" height="3" fill="#000"/><rect x="457" y="100" width="1" height="4" fill="#000"/><rect x="463" y="101" width="1" height="3" fill="#000"/><rect x="469" y="100" width="1" height="4" fill="#000"/><rect x="475" y="101" width="1" height="3" fill="#000"/><rect x="480" y="100" width="1" height="4" fill="#000"/><rect x="486" y="101" width="1" height="3" fill="#000"/><rect x="492" y="100" width="1" height="4" fill="#000"/><rect x="498" y="101" width="1" height="3" fill="#000"/><rect x="504" y="88" width="1" height="16" fill="#000"/><text x="506" y="99" font-family="Liberation Sans" font-size="9.5" fill="#0c1020" stroke="#0c1020" stroke-width="0.25" shape-rendering="auto">20</text><rect x="510" y="101" width="1" height="3" fill="#000"/><rect x="516" y="100" width="1" height="4" fill="#000"/><rect x="521" y="101" width="1" height="3" fill="#000"/><rect x="527" y="100" width="1" height="4" fill="#000"/><rect x="533" y="101" width="1" height="3" fill="#000"/><rect x="539" y="100" width="1" height="4" fill="#000"/><rect x="545" y="101" width="1" height="3" fill="#000"/><rect x="551" y="100" width="1" height="4" fill="#000"/><rect x="557" y="101" width="1" height="3" fill="#000"/><rect x="562" y="88" width="1" height="16" fill="#000"/><text x="564" y="99" font-family="Liberation Sans" font-size="9.5" fill="#0c1020" stroke="#0c1020" stroke-width="0.25" shape-rendering="auto">15</text><rect x="568" y="101" width="1" height="3" fill="#000"/><rect x="574" y="100" width="1" height="4" fill="#000"/><rect x="580" y="101" width="1" height="3" fill="#000"/><rect x="586" y="100" width="1" height="4" fill="#000"/><rect x="592" y="101" width="1" height="3" fill="#000"/><rect x="598" y="100" width="1" height="4" fill="#000"/><rect x="603" y="101" width="1" height="3" fill="#000"/><rect x="609" y="100" width="1" height="4" fill="#000"/><rect x="615" y="101" width="1" height="3" fill="#000"/><rect x="621" y="88" width="1" height="16" fill="#000"/><text x="623" y="99" font-family="Liberation Sans" font-size="9.5" fill="#0c1020" stroke="#0c1020" stroke-width="0.25" shape-rendering="auto">10</text><rect x="627" y="101" width="1" height="3" fill="#000"/><rect x="633" y="100" width="1" height="4" fill="#000"/><rect x="639" y="101" width="1" height="3" fill="#000"/><rect x="644" y="100" width="1" height="4" fill="#000"/><rect x="650" y="101" width="1" height="3" fill="#000"/><rect x="656" y="100" width="1" height="4" fill="#000"/><rect x="662" y="101" width="1" height="3" fill="#000"/><rect x="668" y="100" width="1" height="4" fill="#000"/><rect x="674" y="101" width="1" height="3" fill="#000"/><rect x="680" y="88" width="1" height="16" fill="#000"/><text x="682" y="99" font-family="Liberation Sans" font-size="9.5" fill="#0c1020" stroke="#0c1020" stroke-width="0.25" shape-rendering="auto">5</text><rect x="685" y="101" width="1" height="3" fill="#000"/><rect x="691" y="100" width="1" height="4" fill="#000"/><rect x="697" y="101" width="1" height="3" fill="#000"/><rect x="703" y="100" width="1" height="4" fill="#000"/><rect x="709" y="101" width="1" height="3" fill="#000"/><rect x="715" y="100" width="1" height="4" fill="#000"/><rect x="721" y="101" width="1" height="3" fill="#000"/><rect x="726" y="100" width="1" height="4" fill="#000"/><rect x="732" y="101" width="1" height="3" fill="#000"/><rect x="738" y="88" width="1" height="16" fill="#000"/><text x="740" y="99" font-family="Liberation Sans" font-size="9.5" fill="#0c1020" stroke="#0c1020" stroke-width="0.25" shape-rendering="auto">0</text><rect x="744" y="101" width="1" height="3" fill="#000"/><rect x="750" y="100" width="1" height="4" fill="#000"/><rect x="756" y="101" width="1" height="3" fill="#000"/><rect x="762" y="100" width="1" height="4" fill="#000"/><rect x="767" y="101" width="1" height="3" fill="#000"/><rect x="773" y="100" width="1" height="4" fill="#000"/><rect x="779" y="101" width="1" height="3" fill="#000"/><rect x="785" y="100" width="1" height="4" fill="#000"/><rect x="791" y="101" width="1" height="3" fill="#000"/><rect x="797" y="88" width="1" height="16" fill="#000"/><text x="799" y="99" font-family="Liberation Sans" font-size="9.5" fill="#0c1020" stroke="#0c1020" stroke-width="0.25" shape-rendering="auto">5</text><rect x="803" y="101" width="1" height="3" fill="#000"/><rect x="808" y="100" width="1" height="4" fill="#000"/><rect x="814" y="101" width="1" height="3" fill="#000"/><rect x="820" y="100" width="1" height="4" fill="#000"/><rect x="826" y="101" width="1" height="3" fill="#000"/><rect x="832" y="100" width="1" height="4" fill="#000"/><rect x="838" y="101" width="1" height="3" fill="#000"/><rect x="844" y="100" width="1" height="4" fill="#000"/><rect x="849" y="101" width="1" height="3" fill="#000"/><rect x="855" y="88" width="1" height="16" fill="#000"/><text x="857" y="99" font-family="Liberation Sans" font-size="9.5" fill="#0c1020" stroke="#0c1020" stroke-width="0.25" shape-rendering="auto">10</text><rect x="861" y="101" width="1" height="3" fill="#000"/><rect x="867" y="100" width="1" height="4" fill="#000"/><rect x="873" y="101" width="1" height="3" fill="#000"/><rect x="879" y="100" width="1" height="4" fill="#000"/><rect x="885" y="101" width="1" height="3" fill="#000"/><rect x="890" y="100" width="1" height="4" fill="#000"/><rect x="896" y="101" width="1" height="3" fill="#000"/><rect x="902" y="100" width="1" height="4" fill="#000"/><rect x="908" y="101" width="1" height="3" fill="#000"/><rect x="914" y="88" width="1" height="16" fill="#000"/><text x="916" y="99" font-family="Liberation Sans" font-size="9.5" fill="#0c1020" stroke="#0c1020" stroke-width="0.25" shape-rendering="auto">15</text><rect x="920" y="101" width="1" height="3" fill="#000"/><rect x="926" y="100" width="1" height="4" fill="#000"/><rect x="931" y="101" width="1" height="3" fill="#000"/><rect x="937" y="100" width="1" height="4" fill="#000"/><rect x="943" y="101" width="1" height="3" fill="#000"/><rect x="949" y="100" width="1" height="4" fill="#000"/><rect x="955" y="101" width="1" height="3" fill="#000"/><rect x="961" y="100" width="1" height="4" fill="#000"/><rect x="967" y="101" width="1" height="3" fill="#000"/><rect x="972" y="88" width="1" height="16" fill="#000"/><text x="974" y="99" font-family="Liberation Sans" font-size="9.5" fill="#0c1020" stroke="#0c1020" stroke-width="0.25" shape-rendering="auto">20</text><rect x="978" y="101" width="1" height="3" fill="#000"/><rect x="984" y="100" width="1" height="4" fill="#000"/><rect x="990" y="101" width="1" height="3" fill="#000"/><rect x="996" y="100" width="1" height="4" fill="#000"/><rect x="1002" y="101" width="1" height="3" fill="#000"/><rect x="1008" y="100" width="1" height="4" fill="#000"/><rect x="1013" y="101" width="1" height="3" fill="#000"/><rect x="1019" y="100" width="1" height="4" fill="#000"/><rect x="1025" y="101" width="1" height="3" fill="#000"/><rect x="1031" y="88" width="1" height="16" fill="#000"/><text x="1033" y="99" font-family="Liberation Sans" font-size="9.5" fill="#0c1020" stroke="#0c1020" stroke-width="0.25" shape-rendering="auto">25</text><rect x="1037" y="101" width="1" height="3" fill="#000"/><rect x="1043" y="100" width="1" height="4" fill="#000"/><rect x="1049" y="101" width="1" height="3" fill="#000"/><rect x="1054" y="100" width="1" height="4" fill="#000"/><rect x="1060" y="101" width="1" height="3" fill="#000"/><rect x="1066" y="100" width="1" height="4" fill="#000"/><rect x="1072" y="101" width="1" height="3" fill="#000"/><rect x="1078" y="100" width="1" height="4" fill="#000"/><rect x="1084" y="101" width="1" height="3" fill="#000"/><rect x="1090" y="88" width="1" height="16" fill="#000"/><text x="1092" y="99" font-family="Liberation Sans" font-size="9.5" fill="#0c1020" stroke="#0c1020" stroke-width="0.25" shape-rendering="auto">30</text><rect x="1095" y="101" width="1" height="3" fill="#000"/><rect x="1101" y="100" width="1" height="4" fill="#000"/><rect x="1107" y="101" width="1" height="3" fill="#000"/><rect x="1113" y="100" width="1" height="4" fill="#000"/><rect x="1119" y="101" width="1" height="3" fill="#000"/><rect x="1125" y="100" width="1" height="4" fill="#000"/><rect x="1131" y="101" width="1" height="3" fill="#000"/><rect x="1136" y="100" width="1" height="4" fill="#000"/><rect x="1142" y="101" width="1" height="3" fill="#000"/><rect x="1148" y="88" width="1" height="16" fill="#000"/><text x="1150" y="99" font-family="Liberation Sans" font-size="9.5" fill="#0c1020" stroke="#0c1020" stroke-width="0.25" shape-rendering="auto">35</text><rect x="1154" y="101" width="1" height="3" fill="#000"/><rect x="1160" y="100" width="1" height="4" fill="#000"/><rect x="1166" y="101" width="1" height="3" fill="#000"/><rect x="1172" y="100" width="1" height="4" fill="#000"/><rect x="1177" y="101" width="1" height="3" fill="#000"/><rect x="1183" y="100" width="1" height="4" fill="#000"/><rect x="1189" y="101" width="1" height="3" fill="#000"/><rect x="1195" y="100" width="1" height="4" fill="#000"/><rect x="1201" y="101" width="1" height="3" fill="#000"/><rect x="1207" y="88" width="1" height="16" fill="#000"/><text x="1209" y="99" font-family="Liberation Sans" font-size="9.5" fill="#0c1020" stroke="#0c1020" stroke-width="0.25" shape-rendering="auto">40</text><rect x="1213" y="101" width="1" height="3" fill="#000"/><rect x="1218" y="100" width="1" height="4" fill="#000"/><rect x="1224" y="101" width="1" height="3" fill="#000"/><rect x="1230" y="100" width="1" height="4" fill="#000"/><rect x="1236" y="101" width="1" height="3" fill="#000"/><rect x="1242" y="100" width="1" height="4" fill="#000"/><rect x="1248" y="101" width="1" height="3" fill="#000"/><rect x="1254" y="100" width="1" height="4" fill="#000"/><rect x="1259" y="101" width="1" height="3" fill="#000"/><rect x="1265" y="88" width="1" height="16" fill="#000"/><text x="1267" y="99" font-family="Liberation Sans" font-size="9.5" fill="#0c1020" stroke="#0c1020" stroke-width="0.25" shape-rendering="auto">45</text><rect x="1271" y="101" width="1" height="3" fill="#000"/><rect x="1277" y="100" width="1" height="4" fill="#000"/><rect x="1283" y="101" width="1" height="3" fill="#000"/><rect x="1289" y="100" width="1" height="4" fill="#000"/><rect x="1295" y="101" width="1" height="3" fill="#000"/><rect x="1300" y="100" width="1" height="4" fill="#000"/><rect x="1306" y="101" width="1" height="3" fill="#000"/><rect x="1312" y="100" width="1" height="4" fill="#000"/><rect x="1318" y="101" width="1" height="3" fill="#000"/><rect x="1324" y="88" width="1" height="16" fill="#000"/><text x="1326" y="99" font-family="Liberation Sans" font-size="9.5" fill="#0c1020" stroke="#0c1020" stroke-width="0.25" shape-rendering="auto">50</text><rect x="1330" y="101" width="1" height="3" fill="#000"/><rect x="1336" y="100" width="1" height="4" fill="#000"/><rect x="1341" y="101" width="1" height="3" fill="#000"/><rect x="1347" y="100" width="1" height="4" fill="#000"/><rect x="1353" y="101" width="1" height="3" fill="#000"/><rect x="1359" y="100" width="1" height="4" fill="#000"/><rect x="1365" y="101" width="1" height="3" fill="#000"/><rect x="1371" y="100" width="1" height="4" fill="#000"/><rect x="1377" y="101" width="1" height="3" fill="#000"/><rect x="1382" y="88" width="1" height="16" fill="#000"/><text x="1384" y="99" font-family="Liberation Sans" font-size="9.5" fill="#0c1020" stroke="#0c1020" stroke-width="0.25" shape-rendering="auto">55</text><rect x="1388" y="101" width="1" height="3" fill="#000"/><rect x="1394" y="100" width="1" height="4" fill="#000"/><rect x="1400" y="101" width="1" height="3" fill="#000"/><rect x="1406" y="100" width="1" height="4" fill="#000"/><rect x="1412" y="101" width="1" height="3" fill="#000"/><rect x="1418" y="100" width="1" height="4" fill="#000"/><rect x="1423" y="101" width="1" height="3" fill="#000"/><rect x="1429" y="100" width="1" height="4" fill="#000"/><rect x="1435" y="101" width="1" height="3" fill="#000"/><rect x="1441" y="88" width="1" height="16" fill="#000"/><text x="1443" y="99" font-family="Liberation Sans" font-size="9.5" fill="#0c1020" stroke="#0c1020" stroke-width="0.25" shape-rendering="auto">60</text><rect x="1447" y="101" width="1" height="3" fill="#000"/><rect x="1453" y="100" width="1" height="4" fill="#000"/><rect x="1459" y="101" width="1" height="3" fill="#000"/><rect x="1464" y="100" width="1" height="4" fill="#000"/><rect x="1470" y="101" width="1" height="3" fill="#000"/><rect x="1476" y="100" width="1" height="4" fill="#000"/><rect x="1482" y="101" width="1" height="3" fill="#000"/><rect x="1488" y="100" width="1" height="4" fill="#000"/><rect x="1494" y="101" width="1" height="3" fill="#000"/><rect x="1500" y="88" width="1" height="16" fill="#000"/><text x="1502" y="99" font-family="Liberation Sans" font-size="9.5" fill="#0c1020" stroke="#0c1020" stroke-width="0.25" shape-rendering="auto">65</text><rect x="1505" y="101" width="1" height="3" fill="#000"/><rect x="1511" y="100" width="1" height="4" fill="#000"/><rect x="1517" y="101" width="1" height="3" fill="#000"/><rect x="1523" y="100" width="1" height="4" fill="#000"/><rect x="1529" y="101" width="1" height="3" fill="#000"/><rect x="1535" y="100" width="1" height="4" fill="#000"/><rect x="1541" y="101" width="1" height="3" fill="#000"/><rect x="1546" y="100" width="1" height="4" fill="#000"/><rect x="1552" y="101" width="1" height="3" fill="#000"/><rect x="1558" y="88" width="1" height="16" fill="#000"/><text x="1560" y="99" font-family="Liberation Sans" font-size="9.5" fill="#0c1020" stroke="#0c1020" stroke-width="0.25" shape-rendering="auto">70</text><rect x="1564" y="101" width="1" height="3" fill="#000"/><rect x="1570" y="100" width="1" height="4" fill="#000"/><rect x="1576" y="101" width="1" height="3" fill="#000"/><rect x="1582" y="100" width="1" height="4" fill="#000"/><rect x="1587" y="101" width="1" height="3" fill="#000"/><rect x="1593" y="100" width="1" height="4" fill="#000"/><rect x="1599" y="101" width="1" height="3" fill="#000"/><rect x="1605" y="100" width="1" height="4" fill="#000"/><rect x="1611" y="101" width="1" height="3" fill="#000"/><rect x="1617" y="88" width="1" height="16" fill="#000"/><text x="1619" y="99" font-family="Liberation Sans" font-size="9.5" fill="#0c1020" stroke="#0c1020" stroke-width="0.25" shape-rendering="auto">75</text><rect x="1623" y="101" width="1" height="3" fill="#000"/><rect x="1628" y="100" width="1" height="4" fill="#000"/><rect x="1634" y="101" width="1" height="3" fill="#000"/><rect x="1640" y="100" width="1" height="4" fill="#000"/><rect x="1646" y="101" width="1" height="3" fill="#000"/><rect x="1652" y="100" width="1" height="4" fill="#000"/><rect x="1658" y="101" width="1" height="3" fill="#000"/><rect x="1664" y="100" width="1" height="4" fill="#000"/><rect x="1669" y="101" width="1" height="3" fill="#000"/><rect x="1675" y="88" width="1" height="16" fill="#000"/><text x="1677" y="99" font-family="Liberation Sans" font-size="9.5" fill="#0c1020" stroke="#0c1020" stroke-width="0.25" shape-rendering="auto">80</text><rect x="1681" y="101" width="1" height="3" fill="#000"/><rect x="898" y="89" width="1" height="1" fill="#000"/><rect x="898" y="91" width="1" height="1" fill="#000"/><rect x="898" y="93" width="1" height="1" fill="#000"/><rect x="898" y="95" width="1" height="1" fill="#000"/><rect x="898" y="97" width="1" height="1" fill="#000"/><rect x="898" y="99" width="1" height="1" fill="#000"/><rect x="898" y="101" width="1" height="1" fill="#000"/><rect x="898" y="103" width="1" height="1" fill="#000"/></svg><svg width="16" height="915" viewBox="65 105 16 915" style="position:absolute;left:65px;top:105px" shape-rendering="crispEdges"><rect x="65" y="105" width="16" height="915" fill="#fff"/><rect x="80" y="105" width="1" height="915" fill="#000"/><rect x="76" y="100" width="4" height="1" fill="#000"/><rect x="76" y="106" width="4" height="1" fill="#000"/><rect x="76" y="111" width="4" height="1" fill="#000"/><rect x="65" y="117" width="15" height="1" fill="#000"/><text x="67" y="113.0" font-family="Liberation Sans" font-size="9.5" fill="#0c1020" stroke="#0c1020" stroke-width="0.25" shape-rendering="auto">5</text><rect x="76" y="123" width="4" height="1" fill="#000"/><rect x="76" y="129" width="4" height="1" fill="#000"/><rect x="76" y="135" width="4" height="1" fill="#000"/><rect x="76" y="141" width="4" height="1" fill="#000"/><rect x="76" y="147" width="4" height="1" fill="#000"/><rect x="76" y="152" width="4" height="1" fill="#000"/><rect x="76" y="158" width="4" height="1" fill="#000"/><rect x="76" y="164" width="4" height="1" fill="#000"/><rect x="76" y="170" width="4" height="1" fill="#000"/><rect x="65" y="176" width="15" height="1" fill="#000"/><text x="67" y="172.0" font-family="Liberation Sans" font-size="9.5" fill="#0c1020" stroke="#0c1020" stroke-width="0.25" shape-rendering="auto">0</text><text x="67" y="162.2" font-family="Liberation Sans" font-size="9.5" fill="#0c1020" stroke="#0c1020" stroke-width="0.25" shape-rendering="auto">1</text><rect x="76" y="182" width="4" height="1" fill="#000"/><rect x="76" y="188" width="4" height="1" fill="#000"/><rect x="76" y="193" width="4" height="1" fill="#000"/><rect x="76" y="199" width="4" height="1" fill="#000"/><rect x="76" y="205" width="4" height="1" fill="#000"/><rect x="76" y="211" width="4" height="1" fill="#000"/><rect x="76" y="217" width="4" height="1" fill="#000"/><rect x="76" y="223" width="4" height="1" fill="#000"/><rect x="76" y="229" width="4" height="1" fill="#000"/><rect x="65" y="234" width="15" height="1" fill="#000"/><text x="67" y="230.0" font-family="Liberation Sans" font-size="9.5" fill="#0c1020" stroke="#0c1020" stroke-width="0.25" shape-rendering="auto">5</text><text x="67" y="220.2" font-family="Liberation Sans" font-size="9.5" fill="#0c1020" stroke="#0c1020" stroke-width="0.25" shape-rendering="auto">1</text><rect x="76" y="240" width="4" height="1" fill="#000"/><rect x="76" y="246" width="4" height="1" fill="#000"/><rect x="76" y="252" width="4" height="1" fill="#000"/><rect x="76" y="258" width="4" height="1" fill="#000"/><rect x="76" y="264" width="4" height="1" fill="#000"/><rect x="76" y="269" width="4" height="1" fill="#000"/><rect x="76" y="275" width="4" height="1" fill="#000"/><rect x="76" y="281" width="4" height="1" fill="#000"/><rect x="76" y="287" width="4" height="1" fill="#000"/><rect x="65" y="293" width="15" height="1" fill="#000"/><text x="67" y="289.0" font-family="Liberation Sans" font-size="9.5" fill="#0c1020" stroke="#0c1020" stroke-width="0.25" shape-rendering="auto">0</text><text x="67" y="279.2" font-family="Liberation Sans" font-size="9.5" fill="#0c1020" stroke="#0c1020" stroke-width="0.25" shape-rendering="auto">2</text><rect x="76" y="299" width="4" height="1" fill="#000"/><rect x="76" y="305" width="4" height="1" fill="#000"/><rect x="76" y="310" width="4" height="1" fill="#000"/><rect x="76" y="316" width="4" height="1" fill="#000"/><rect x="76" y="322" width="4" height="1" fill="#000"/><rect x="76" y="328" width="4" height="1" fill="#000"/><rect x="76" y="334" width="4" height="1" fill="#000"/><rect x="76" y="340" width="4" height="1" fill="#000"/><rect x="76" y="346" width="4" height="1" fill="#000"/><rect x="65" y="351" width="15" height="1" fill="#000"/><text x="67" y="347.0" font-family="Liberation Sans" font-size="9.5" fill="#0c1020" stroke="#0c1020" stroke-width="0.25" shape-rendering="auto">5</text><text x="67" y="337.2" font-family="Liberation Sans" font-size="9.5" fill="#0c1020" stroke="#0c1020" stroke-width="0.25" shape-rendering="auto">2</text><rect x="76" y="357" width="4" height="1" fill="#000"/><rect x="76" y="363" width="4" height="1" fill="#000"/><rect x="76" y="369" width="4" height="1" fill="#000"/><rect x="76" y="375" width="4" height="1" fill="#000"/><rect x="76" y="381" width="4" height="1" fill="#000"/><rect x="76" y="387" width="4" height="1" fill="#000"/><rect x="76" y="392" width="4" height="1" fill="#000"/><rect x="76" y="398" width="4" height="1" fill="#000"/><rect x="76" y="404" width="4" height="1" fill="#000"/><rect x="65" y="410" width="15" height="1" fill="#000"/><text x="67" y="406.0" font-family="Liberation Sans" font-size="9.5" fill="#0c1020" stroke="#0c1020" stroke-width="0.25" shape-rendering="auto">0</text><text x="67" y="396.2" font-family="Liberation Sans" font-size="9.5" fill="#0c1020" stroke="#0c1020" stroke-width="0.25" shape-rendering="auto">3</text><rect x="76" y="416" width="4" height="1" fill="#000"/><rect x="76" y="422" width="4" height="1" fill="#000"/><rect x="76" y="428" width="4" height="1" fill="#000"/><rect x="76" y="433" width="4" height="1" fill="#000"/><rect x="76" y="439" width="4" height="1" fill="#000"/><rect x="76" y="445" width="4" height="1" fill="#000"/><rect x="76" y="451" width="4" height="1" fill="#000"/><rect x="76" y="457" width="4" height="1" fill="#000"/><rect x="76" y="463" width="4" height="1" fill="#000"/><rect x="65" y="469" width="15" height="1" fill="#000"/><text x="67" y="465.0" font-family="Liberation Sans" font-size="9.5" fill="#0c1020" stroke="#0c1020" stroke-width="0.25" shape-rendering="auto">5</text><text x="67" y="455.2" font-family="Liberation Sans" font-size="9.5" fill="#0c1020" stroke="#0c1020" stroke-width="0.25" shape-rendering="auto">3</text><rect x="76" y="474" width="4" height="1" fill="#000"/><rect x="76" y="480" width="4" height="1" fill="#000"/><rect x="76" y="486" width="4" height="1" fill="#000"/><rect x="76" y="492" width="4" height="1" fill="#000"/><rect x="76" y="498" width="4" height="1" fill="#000"/><rect x="76" y="504" width="4" height="1" fill="#000"/><rect x="76" y="510" width="4" height="1" fill="#000"/><rect x="76" y="515" width="4" height="1" fill="#000"/><rect x="76" y="521" width="4" height="1" fill="#000"/><rect x="65" y="527" width="15" height="1" fill="#000"/><text x="67" y="523.0" font-family="Liberation Sans" font-size="9.5" fill="#0c1020" stroke="#0c1020" stroke-width="0.25" shape-rendering="auto">0</text><text x="67" y="513.2" font-family="Liberation Sans" font-size="9.5" fill="#0c1020" stroke="#0c1020" stroke-width="0.25" shape-rendering="auto">4</text><rect x="76" y="533" width="4" height="1" fill="#000"/><rect x="76" y="539" width="4" height="1" fill="#000"/><rect x="76" y="545" width="4" height="1" fill="#000"/><rect x="76" y="551" width="4" height="1" fill="#000"/><rect x="76" y="556" width="4" height="1" fill="#000"/><rect x="76" y="562" width="4" height="1" fill="#000"/><rect x="76" y="568" width="4" height="1" fill="#000"/><rect x="76" y="574" width="4" height="1" fill="#000"/><rect x="76" y="580" width="4" height="1" fill="#000"/><rect x="65" y="586" width="15" height="1" fill="#000"/><text x="67" y="582.0" font-family="Liberation Sans" font-size="9.5" fill="#0c1020" stroke="#0c1020" stroke-width="0.25" shape-rendering="auto">5</text><text x="67" y="572.2" font-family="Liberation Sans" font-size="9.5" fill="#0c1020" stroke="#0c1020" stroke-width="0.25" shape-rendering="auto">4</text><rect x="76" y="592" width="4" height="1" fill="#000"/><rect x="76" y="597" width="4" height="1" fill="#000"/><rect x="76" y="603" width="4" height="1" fill="#000"/><rect x="76" y="609" width="4" height="1" fill="#000"/><rect x="76" y="615" width="4" height="1" fill="#000"/><rect x="76" y="621" width="4" height="1" fill="#000"/><rect x="76" y="627" width="4" height="1" fill="#000"/><rect x="76" y="633" width="4" height="1" fill="#000"/><rect x="76" y="638" width="4" height="1" fill="#000"/><rect x="65" y="644" width="15" height="1" fill="#000"/><text x="67" y="640.0" font-family="Liberation Sans" font-size="9.5" fill="#0c1020" stroke="#0c1020" stroke-width="0.25" shape-rendering="auto">0</text><text x="67" y="630.2" font-family="Liberation Sans" font-size="9.5" fill="#0c1020" stroke="#0c1020" stroke-width="0.25" shape-rendering="auto">5</text><rect x="76" y="650" width="4" height="1" fill="#000"/><rect x="76" y="656" width="4" height="1" fill="#000"/><rect x="76" y="662" width="4" height="1" fill="#000"/><rect x="76" y="668" width="4" height="1" fill="#000"/><rect x="76" y="674" width="4" height="1" fill="#000"/><rect x="76" y="679" width="4" height="1" fill="#000"/><rect x="76" y="685" width="4" height="1" fill="#000"/><rect x="76" y="691" width="4" height="1" fill="#000"/><rect x="76" y="697" width="4" height="1" fill="#000"/><rect x="65" y="703" width="15" height="1" fill="#000"/><text x="67" y="699.0" font-family="Liberation Sans" font-size="9.5" fill="#0c1020" stroke="#0c1020" stroke-width="0.25" shape-rendering="auto">5</text><text x="67" y="689.2" font-family="Liberation Sans" font-size="9.5" fill="#0c1020" stroke="#0c1020" stroke-width="0.25" shape-rendering="auto">5</text><rect x="76" y="709" width="4" height="1" fill="#000"/><rect x="76" y="715" width="4" height="1" fill="#000"/><rect x="76" y="720" width="4" height="1" fill="#000"/><rect x="76" y="726" width="4" height="1" fill="#000"/><rect x="76" y="732" width="4" height="1" fill="#000"/><rect x="76" y="738" width="4" height="1" fill="#000"/><rect x="76" y="744" width="4" height="1" fill="#000"/><rect x="76" y="750" width="4" height="1" fill="#000"/><rect x="76" y="756" width="4" height="1" fill="#000"/><rect x="65" y="761" width="15" height="1" fill="#000"/><text x="67" y="757.0" font-family="Liberation Sans" font-size="9.5" fill="#0c1020" stroke="#0c1020" stroke-width="0.25" shape-rendering="auto">0</text><text x="67" y="747.2" font-family="Liberation Sans" font-size="9.5" fill="#0c1020" stroke="#0c1020" stroke-width="0.25" shape-rendering="auto">6</text><rect x="76" y="767" width="4" height="1" fill="#000"/><rect x="76" y="773" width="4" height="1" fill="#000"/><rect x="76" y="779" width="4" height="1" fill="#000"/><rect x="76" y="785" width="4" height="1" fill="#000"/><rect x="76" y="791" width="4" height="1" fill="#000"/><rect x="76" y="796" width="4" height="1" fill="#000"/><rect x="76" y="802" width="4" height="1" fill="#000"/><rect x="76" y="808" width="4" height="1" fill="#000"/><rect x="76" y="814" width="4" height="1" fill="#000"/><rect x="65" y="820" width="15" height="1" fill="#000"/><text x="67" y="816.0" font-family="Liberation Sans" font-size="9.5" fill="#0c1020" stroke="#0c1020" stroke-width="0.25" shape-rendering="auto">5</text><text x="67" y="806.2" font-family="Liberation Sans" font-size="9.5" fill="#0c1020" stroke="#0c1020" stroke-width="0.25" shape-rendering="auto">6</text><rect x="76" y="826" width="4" height="1" fill="#000"/><rect x="76" y="832" width="4" height="1" fill="#000"/><rect x="76" y="837" width="4" height="1" fill="#000"/><rect x="76" y="843" width="4" height="1" fill="#000"/><rect x="76" y="849" width="4" height="1" fill="#000"/><rect x="76" y="855" width="4" height="1" fill="#000"/><rect x="76" y="861" width="4" height="1" fill="#000"/><rect x="76" y="867" width="4" height="1" fill="#000"/><rect x="76" y="873" width="4" height="1" fill="#000"/><rect x="65" y="878" width="15" height="1" fill="#000"/><text x="67" y="874.0" font-family="Liberation Sans" font-size="9.5" fill="#0c1020" stroke="#0c1020" stroke-width="0.25" shape-rendering="auto">0</text><text x="67" y="864.2" font-family="Liberation Sans" font-size="9.5" fill="#0c1020" stroke="#0c1020" stroke-width="0.25" shape-rendering="auto">7</text><rect x="76" y="884" width="4" height="1" fill="#000"/><rect x="76" y="890" width="4" height="1" fill="#000"/><rect x="76" y="896" width="4" height="1" fill="#000"/><rect x="76" y="902" width="4" height="1" fill="#000"/><rect x="76" y="908" width="4" height="1" fill="#000"/><rect x="76" y="914" width="4" height="1" fill="#000"/><rect x="76" y="919" width="4" height="1" fill="#000"/><rect x="76" y="925" width="4" height="1" fill="#000"/><rect x="76" y="931" width="4" height="1" fill="#000"/><rect x="65" y="937" width="15" height="1" fill="#000"/><text x="67" y="933.0" font-family="Liberation Sans" font-size="9.5" fill="#0c1020" stroke="#0c1020" stroke-width="0.25" shape-rendering="auto">5</text><text x="67" y="923.2" font-family="Liberation Sans" font-size="9.5" fill="#0c1020" stroke="#0c1020" stroke-width="0.25" shape-rendering="auto">7</text><rect x="76" y="943" width="4" height="1" fill="#000"/><rect x="76" y="949" width="4" height="1" fill="#000"/><rect x="76" y="955" width="4" height="1" fill="#000"/><rect x="76" y="960" width="4" height="1" fill="#000"/><rect x="76" y="966" width="4" height="1" fill="#000"/><rect x="76" y="972" width="4" height="1" fill="#000"/><rect x="76" y="978" width="4" height="1" fill="#000"/><rect x="76" y="984" width="4" height="1" fill="#000"/><rect x="76" y="990" width="4" height="1" fill="#000"/><rect x="65" y="996" width="15" height="1" fill="#000"/><text x="67" y="992.0" font-family="Liberation Sans" font-size="9.5" fill="#0c1020" stroke="#0c1020" stroke-width="0.25" shape-rendering="auto">0</text><text x="67" y="982.2" font-family="Liberation Sans" font-size="9.5" fill="#0c1020" stroke="#0c1020" stroke-width="0.25" shape-rendering="auto">8</text><rect x="76" y="1001" width="4" height="1" fill="#000"/><rect x="76" y="1007" width="4" height="1" fill="#000"/><rect x="76" y="1013" width="4" height="1" fill="#000"/><rect x="66" y="120" width="1" height="1" fill="#000"/><rect x="68" y="120" width="1" height="1" fill="#000"/><rect x="70" y="120" width="1" height="1" fill="#000"/><rect x="72" y="120" width="1" height="1" fill="#000"/><rect x="74" y="120" width="1" height="1" fill="#000"/><rect x="76" y="120" width="1" height="1" fill="#000"/><rect x="78" y="120" width="1" height="1" fill="#000"/></svg><div style="position:absolute;left:1684px;top:88px;width:16px;height:932px;background:#ececec;border-left:1px solid #e0e0e0"></div><svg style="position:absolute;left:1688px;top:94px;" width="9" height="6" viewBox="1688 94 9 6"><path d="M1689,99 L1692.5,95.5 L1696,99 Z" fill="#444"/></svg><div style="position:absolute;left:1685px;top:545px;width:14px;height:15px;background:linear-gradient(90deg,#fafafa,#d0d0d0);border:1px solid #7a7a7a;border-radius:2px"></div><svg style="position:absolute;left:1688px;top:1008px;" width="9" height="6" viewBox="1688 1008 9 6"><path d="M1688.5,1008.5 L1692.5,1013.5 L1696.5,1008.5 Z" fill="#333"/></svg><div style="position:absolute;left:65px;top:1020px;width:1619px;height:14px;background:#ececec"></div><div style="position:absolute;left:65px;top:1020px;width:58px;height:14px;background:#fff"></div><div style="position:absolute;left:70.5px;top:1024.17px;font-size:10.2px;line-height:10.2px;color:#111;font-weight:normal;white-space:nowrap;">413,61%</div><svg style="position:absolute;left:113px;top:1027px;" width="7" height="4" viewBox="113 1027 7 4"><path d="M113,1027 L120,1027 L116.5,1031 Z" fill="#111"/></svg><svg style="position:absolute;left:127px;top:1021px;" width="100" height="13" viewBox="127 1021 100 13"><path d="M131,1022 V1031 M137,1022 L132,1026.5 L137,1031 Z" fill="#888" stroke="#888" stroke-width="0.8"/><path d="M151,1022 L146,1026.5 L151,1031 Z" fill="#888"/><path d="M208,1022 L213,1026.5 L208,1031 Z" fill="#888"/><path d="M220,1022 L225,1026.5 L220,1031 Z M226,1022 V1031" fill="#888" stroke="#888" stroke-width="0.8"/></svg><div style="position:absolute;left:158px;top:1020px;width:42px;height:14px;background:#fff"></div><div style="position:absolute;left:163px;top:1024.17px;font-size:10.2px;line-height:10.2px;color:#111;font-weight:normal;white-space:nowrap;">1</div><svg style="position:absolute;left:190px;top:1027px;" width="7" height="4" viewBox="190 1027 7 4"><path d="M190,1027 L197,1027 L193.5,1031 Z" fill="#111"/></svg><div style="position:absolute;left:235px;top:1020px;width:178px;height:14px;background:linear-gradient(#dadada,#cacaca);border-left:1px solid #f4f4f4;border-right:1px solid #aaa"></div><div style="position:absolute;left:295.5px;top:1023.33px;font-size:10.0px;line-height:10.0px;color:#111;font-weight:normal;white-space:nowrap;">Direktauswahl</div><svg style="position:absolute;left:402px;top:1022px;" width="8" height="11" viewBox="402 1022 8 11"><path d="M403,1022.5 L409,1027.5 L403,1032.5 Z" fill="#111"/></svg><svg style="position:absolute;left:418px;top:1021px;" width="8" height="11" viewBox="418 1021 8 11"><path d="M424,1022.5 L419,1026.5 L424,1030.5 Z" fill="#333"/></svg><div style="position:absolute;left:1028px;top:1020px;width:15px;height:14px;background:linear-gradient(#f8f8f8,#cccccc);border:1px solid #7a7a7a;border-radius:2px"></div><svg style="position:absolute;left:1671px;top:1021px;" width="8" height="11" viewBox="1671 1021 8 11"><path d="M1673,1022.5 L1678,1026.5 L1673,1030.5 Z" fill="#333"/></svg><div style="position:absolute;left:1684px;top:1018px;width:16px;height:16px;background:#fafafa"></div></body></html>
